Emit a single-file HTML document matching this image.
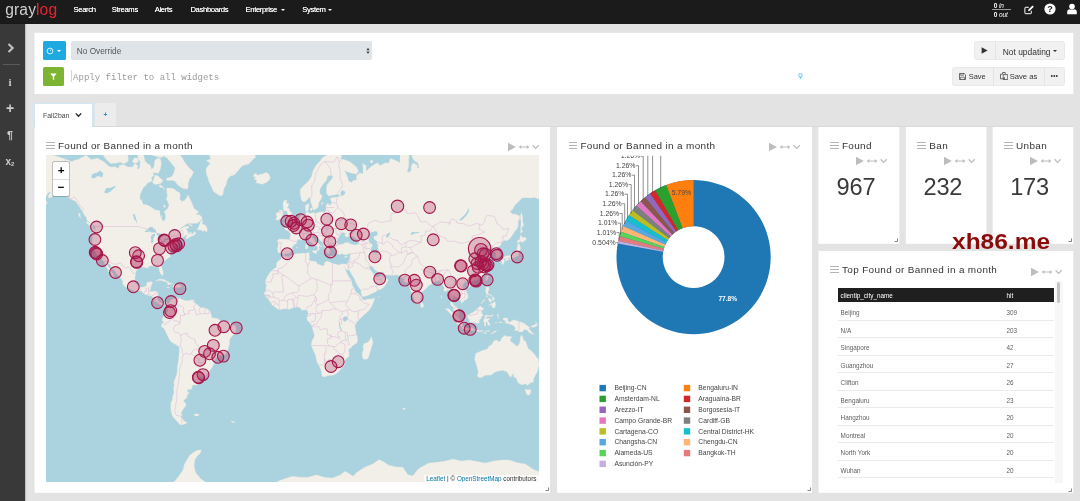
<!DOCTYPE html><html><head><meta charset="utf-8"><title>Graylog - Fail2ban</title><style>
html,body{margin:0;padding:0}
body{width:1080px;height:501px;background:#e3e3e3;position:relative;overflow:hidden;font-family:"Liberation Sans",sans-serif}
.abs{position:absolute}
.nav{position:absolute;left:0;top:0;width:1080px;height:23.6px;background:#1b1b1b}
.logo{position:absolute;left:5.3px;top:0.5px;font-size:15.6px;line-height:18px;letter-spacing:0.1px}
.g1{color:#d0d0d0}.g2{color:#e5252f}
.ni{position:absolute;top:4.9px;font-size:7.7px;letter-spacing:-0.36px;line-height:9px;color:#fff;text-shadow:0 0 0.6px rgba(255,255,255,0.8)}
.caret{position:absolute;width:0;height:0;border-left:2.1px solid transparent;border-right:2.1px solid transparent;border-top:2.3px solid #fff}
.thr{position:absolute;left:992.2px;top:1.6px;width:18.4px;font-size:6.5px;color:#fff;line-height:7px;text-align:left;text-indent:1.6px;letter-spacing:-0.1px}
.thr .t1{border-bottom:0.6px solid #9a9a9a;height:7.4px}
.thr .t2{padding-top:1.1px}
.side{position:absolute;left:0;top:23.6px;width:25px;height:478px;background:#393939;box-shadow:0.8px 0 1.6px rgba(0,0,0,0.35)}
.si{position:absolute;left:0;width:20px;text-align:center;color:#cdcdcd;line-height:14px}
.panel{position:absolute}
.pbg{position:absolute;background:#fff}
.btng{position:absolute;background:#f0f1f0;border:0.5px solid #e9eae9;border-radius:2.8px;box-sizing:border-box}
.wt{position:absolute;font-size:9.95px;letter-spacing:0.35px;line-height:13px;color:#333;white-space:nowrap}
.tt{font-size:6.35px;line-height:8px;color:#606060;white-space:nowrap}
</style></head><body><div id="root" style="position:absolute;left:0;top:0;width:1080px;height:501px;will-change:transform"><svg class="abs" style="left:0;top:0" width="1080" height="501" viewBox="0 0 1080 501"><rect x="34.5" y="32.8" width="1038.8" height="61.3" fill="#fff"/><rect x="34.5" y="126.7" width="515.6" height="366.1" fill="#fff"/><rect x="557.1" y="126.7" width="254.9" height="366.1" fill="#fff"/><rect x="818.4" y="126.7" width="81.0" height="117.1" fill="#fff"/><rect x="905.8" y="126.7" width="80.6" height="117.1" fill="#fff"/><rect x="992.6" y="126.7" width="80.7" height="117.1" fill="#fff"/><rect x="818.5" y="250.9" width="254.8" height="241.9" fill="#fff"/></svg><div class="nav"><div class="logo"><span class="g1">gray</span><span class="g2">log</span></div><span class="ni" style="left:73.5px">Search</span><span class="ni" style="left:111.8px">Streams</span><span class="ni" style="left:154.7px">Alerts</span><span class="ni" style="left:190.4px">Dashboards</span><span class="ni" style="left:245.5px">Enterprise</span><span class="ni" style="left:302.2px">System</span><span class="caret" style="left:281.09999999999997px;top:8.6px;border-top-color:#fff"></span><span class="caret" style="left:327.9px;top:8.6px;border-top-color:#fff"></span><div class="thr"><div class="t1"><b>0</b> <i>in</i></div><div class="t2"><b>0</b> <i>out</i></div></div><svg class="abs" style="left:1023px;top:3.5px" width="12" height="12" viewBox="0 0 12 12"><path d="M8.3 6.8v2.4q0 .5-.5.5H2.4q-.5 0-.5-.5V3.8q0-.5.5-.5h3.4" fill="none" stroke="#fff" stroke-width="1"/><path d="M5 7.3l.5-1.9 4-4 1.3 1.3-4 4z" fill="#fff"/></svg><svg class="abs" style="left:1043.8px;top:3px" width="12" height="12" viewBox="0 0 12 12"><circle cx="6" cy="6" r="5.6" fill="#fff"/><text x="6" y="9.2" font-size="9" font-weight="bold" text-anchor="middle" fill="#1c1c1c" font-family="Liberation Sans, sans-serif">?</text></svg><svg class="abs" style="left:1066px;top:3px" width="12" height="12" viewBox="0 0 12 12"><circle cx="6" cy="3.6" r="2.8" fill="#fff"/><path d="M1.2 11.2V8.6q0-2.2 2.4-2.4 2.4 1.2 4.8 0 2.4.2 2.4 2.4v2.6z" fill="#fff"/></svg></div><div class="side"><svg class="abs" style="left:5px;top:18px" width="12" height="12" viewBox="0 0 12 12"><path d="M3.5 2l4.2 4-4.2 4" fill="none" stroke="#c4c4c4" stroke-width="2"/></svg><div class="abs" style="left:3px;top:40.5px;width:17px;height:1px;background:#5a5a5a"></div><span class="si" style="top:51px;font-family:'Liberation Serif',serif;font-weight:bold;font-size:11px">i</span><span class="si" style="top:77.4px;font-weight:bold;font-size:14px">+</span><span class="si" style="top:104.2px;font-weight:bold;font-size:11px">¶</span><span class="si" style="top:131px;font-weight:bold;font-size:10px">x<span style="font-size:6px;position:relative;top:1.5px">2</span></span></div><div class="panel" style="left:34.5px;top:32.7px;width:1038.8px;height:61.4px"><div class="abs" style="left:8.5px;top:8.6px;width:22.6px;height:19px;background:#1eaae1;border-radius:1.5px"></div><svg class="abs" style="left:11.8px;top:14.3px" width="8" height="8" viewBox="0 0 8 8"><circle cx="4" cy="4" r="2.9" fill="none" stroke="#fff" stroke-width="0.8"/><path d="M4 4l1.3-1.6" stroke="#fff" stroke-width="0.7" fill="none"/></svg><span class="caret" style="left:22.3px;top:17.5px;border-top-color:#fff"></span><div class="abs" style="left:36.7px;top:8.6px;width:301px;height:18.8px;background:#dfe4e8;border-radius:2px"></div><span class="abs" style="left:42.3px;top:14.4px;font-size:8.25px;color:#555;line-height:10px">No Override</span><svg class="abs" style="left:331px;top:14.5px" width="4" height="8" viewBox="0 0 4 8"><path d="M0.4 3.2L2 0.8 3.6 3.2zM0.4 4.6L2 7 3.6 4.6z" fill="#444"/></svg><div class="abs" style="left:8.5px;top:34px;width:21px;height:19px;background:#7db532;border-radius:1.5px"></div><svg class="abs" style="left:15.5px;top:40px" width="7" height="8" viewBox="0 0 7 8"><path d="M0.3 0.5h6.4L4.2 3.6v3.6L2.8 6.2V3.6z" fill="#fff"/></svg><div class="abs" style="left:36px;top:37.5px;width:0.5px;height:12px;background:#d5d5d5"></div><span class="abs" style="left:38.6px;top:39.5px;font-family:'Liberation Mono',monospace;font-size:9.02px;color:#9a9a9a;line-height:11px;white-space:pre">Apply filter to all widgets</span><svg class="abs" style="left:763.5px;top:40px" width="5" height="7" viewBox="0 0 5 7"><circle cx="2.5" cy="2.3" r="1.8" fill="none" stroke="#36b6e6" stroke-width="0.7"/><path d="M1.7 4.6h1.6M1.9 5.6h1.2" stroke="#36b6e6" stroke-width="0.7"/></svg><div class="btng" style="left:939.7px;top:8.6px;width:90.4px;height:19.2px"></div><div class="abs" style="left:960.3px;top:8.6px;width:0.5px;height:19.2px;background:#e4e4e4"></div><svg class="abs" style="left:946.5px;top:14.8px" width="7" height="7" viewBox="0 0 7 7"><path d="M0.6 0.3L6.6 3.5 0.6 6.7z" fill="#333"/></svg><span class="abs" style="left:968.2px;top:14px;font-size:8.45px;color:#333;line-height:10px">Not updating</span><span class="caret" style="left:1018.2px;top:17.6px;border-top-color:#333"></span><div class="btng" style="left:917.8px;top:34.2px;width:112.3px;height:19px"></div><div class="abs" style="left:958.3px;top:34.2px;width:0.5px;height:19px;background:#e4e4e4"></div><div class="abs" style="left:1009.8px;top:34.2px;width:0.5px;height:19px;background:#e4e4e4"></div><svg class="abs" style="left:924.7px;top:40.3px" width="7" height="7" viewBox="0 0 7 7"><path d="M0.5 0.5h4.7l1.3 1.3v4.7h-6z" fill="none" stroke="#333" stroke-width="0.7"/><path d="M1.7 0.5v1.8h2.6V0.5M1.6 6.5V4.2h3.8v2.3" fill="none" stroke="#333" stroke-width="0.6"/></svg><span class="abs" style="left:934.3px;top:39.3px;font-size:7.4px;color:#333;line-height:10px">Save</span><svg class="abs" style="left:965px;top:39.8px" width="8.5" height="8" viewBox="0 0 8.5 8"><path d="M2.6 2.2V0.5h2.6l0 1.7M2.6 2.2H0.5v4.6h4v-1.7" fill="none" stroke="#333" stroke-width="0.7"/><path d="M3.2 2.6h2.7l1.8 0v4.9H3.2z" fill="none" stroke="#333" stroke-width="0.7"/></svg><span class="abs" style="left:975.2px;top:39.3px;font-size:7.65px;color:#333;line-height:10px">Save as</span><svg class="abs" style="left:1015.5px;top:41.5px" width="9" height="4" viewBox="0 0 9 4"><circle cx="1.8" cy="2" r="0.95" fill="#333"/><circle cx="4.3" cy="2" r="0.95" fill="#333"/><circle cx="6.8" cy="2" r="0.95" fill="#333"/></svg></div><div class="abs" style="left:34px;top:126px;width:1039px;height:1px;background:#d9d9d9"></div><div class="abs" style="left:34px;top:103px;width:59px;height:23.6px;background:#fff;border:0.6px solid #cfe7f4;border-bottom:none;box-sizing:border-box;border-radius:1.5px 1.5px 0 0"></div><span class="abs" style="left:43px;top:110.5px;font-size:6.9px;color:#444;line-height:9px">Fail2ban</span><svg class="abs" style="left:75.3px;top:112.2px" width="7" height="6" viewBox="0 0 7 6"><path d="M0.8 1.4L3.5 4.2 6.2 1.4" fill="none" stroke="#222" stroke-width="1.3"/></svg><div class="abs" style="left:94.8px;top:103.4px;width:21.4px;height:22.6px;background:#ececec;border-radius:1.5px 1.5px 0 0"></div><span class="abs" style="left:103.6px;top:110px;font-size:6.5px;color:#1e8fc6;line-height:9px;font-weight:bold">+</span><div class="panel" style="left:34.5px;top:126.8px;width:515.6px;height:365.7px"><div class="abs" style="left:11.599999999999998px;top:15.2px;width:8.7px;height:1.15px;background:#b4b4b4"></div><div class="abs" style="left:11.599999999999998px;top:18.2px;width:8.7px;height:1.15px;background:#b4b4b4"></div><div class="abs" style="left:11.599999999999998px;top:21.2px;width:8.7px;height:1.15px;background:#b4b4b4"></div><span class="wt" style="left:23.4px;top:12.0px">Found or Banned in a month</span><svg class="abs" style="left:473.5px;top:15.5px" width="33" height="10" viewBox="0 0 33 10"><path d="M0 0.8L7.9 5 0 9.2z" fill="#bdbdbd"/><path d="M10.7 5L13.3 2.9V4.5H18.8V2.9L21.4 5 18.8 7.1V5.5H13.3V7.1z" fill="#bdbdbd"/><path d="M24.6 3.3L27.65 6.4 30.7 3.3" fill="none" stroke="#bdbdbd" stroke-width="1.25"/></svg><div class="abs" style="left:11.5px;top:28.7px;width:493.0px;height:326.7px;background:#aad3df;overflow:hidden"><svg class="abs" style="left:0;top:0" width="493.0" height="326.7" viewBox="0 0 493.0 326.7"><path d="M-24.1 21.0L-21.6 9.9L-16.0 4.6L-5.7 -4.1L1.7 -1.6L8.1 0.3L19.4 4.1L25.8 6.8L29.0 5.0L32.2 4.6L37.1 1.8L40.3 0.3L45.1 4.6L51.5 3.2L58.0 6.8L62.0 10.4L64.4 12.1L69.2 11.7L72.5 13.4L73.3 10.4L77.3 9.5L82.1 12.1L86.9 11.7L88.5 8.6L91.8 10.4L91.3 14.2L93.4 13.4L94.2 6.8L91.8 3.2L91.8 -2.6L94.2 -7.1L96.6 -4.1L98.2 2.2L99.0 5.9L101.4 8.6L104.6 10.4L105.4 14.2L107.9 12.1L108.7 5.5L111.1 3.2L114.3 3.6L115.4 7.7L114.6 13.4L112.7 18.3L109.5 17.9L107.0 17.5L107.9 20.7L105.4 22.2L106.2 26.0L103.8 27.1L101.4 28.2L99.8 30.7L97.4 32.4L95.8 35.9L94.2 39.2L93.9 44.0L95.8 45.2L97.2 49.5L99.8 49.5L104.6 51.8L109.5 55.0L113.8 55.5L114.1 59.9L115.4 63.1L116.9 65.7L118.3 65.7L119.6 63.1L119.1 58.6L118.0 56.7L121.5 53.8L123.0 50.1L121.5 46.2L120.2 44.3L121.5 40.8L120.7 37.5L120.7 33.1L124.7 33.1L128.0 33.8L130.4 35.9L133.6 37.5L134.4 40.8L133.6 44.0L136.0 46.5L138.4 45.5L140.8 42.4L142.0 39.8L144.0 44.0L146.5 49.2L148.1 53.5L151.3 55.8L152.9 57.2L149.7 59.4L153.7 59.7L156.4 63.1L154.8 65.5L151.3 68.3L146.5 68.5L141.6 68.5L138.4 70.5L135.5 72.5L132.8 75.6L131.7 76.8L134.4 74.4L138.4 71.5L142.4 71.3L142.8 73.0L140.0 74.0L141.6 75.9L142.0 78.2L144.0 78.9L146.8 78.9L148.9 76.3L150.0 78.7L147.6 80.5L144.0 81.9L140.7 84.3L139.7 82.5L142.1 80.1L140.0 80.5L138.1 81.4L135.2 82.8L133.1 84.1L132.3 86.1L132.6 87.6L133.6 88.3L132.0 88.7L129.6 89.3L127.3 90.4L127.0 92.3L125.7 94.0L125.1 95.4L123.9 98.1L123.9 100.1L124.6 101.4L122.7 102.8L120.7 104.2L118.8 105.5L116.2 107.6L115.3 110.1L115.6 112.5L116.7 115.2L117.3 118.0L116.9 120.3L115.6 120.3L114.6 118.5L113.2 115.8L113.2 113.4L111.4 111.6L109.0 112.1L107.0 110.8L104.6 111.0L102.5 111.2L102.5 113.2L100.6 113.1L98.2 112.3L95.3 112.1L93.4 113.2L91.0 114.7L89.5 117.1L89.8 119.0L89.0 122.4L88.9 125.4L89.8 128.2L91.3 130.5L93.1 131.6L94.5 132.4L96.9 131.9L99.0 131.7L100.5 130.2L100.8 127.6L103.8 126.8L106.2 126.8L106.6 128.0L105.4 130.0L105.0 132.2L104.2 134.4L103.5 136.3L105.4 136.5L107.9 136.3L110.3 136.3L112.2 137.8L111.9 140.3L111.7 142.8L111.4 144.4L112.4 146.0L114.0 147.7L115.9 148.0L117.8 147.0L119.4 146.8L121.4 148.0L122.5 149.1L123.5 147.7L124.6 145.4L125.7 144.2L128.0 143.9L129.9 142.9L131.3 142.1L131.5 143.9L130.7 144.7L131.7 144.6L133.1 143.6L133.8 142.4L134.4 143.6L136.3 144.6L138.4 145.2L140.8 145.7L142.8 145.4L144.9 144.9L146.5 145.0L146.8 146.0L148.4 147.2L149.4 148.5L151.3 149.5L152.9 151.2L154.5 152.5L157.7 152.7L160.1 153.2L162.5 154.6L163.8 155.8L165.0 159.0L165.8 160.9L165.0 162.2L166.6 162.5L168.5 163.2L170.6 163.3L173.0 164.5L174.8 166.2L177.0 166.1L179.4 166.9L181.9 166.7L184.3 168.2L186.4 169.9L189.3 170.6L190.1 173.5L189.9 176.4L188.3 179.0L186.4 180.8L184.4 183.1L183.5 185.8L183.5 189.1L182.7 192.2L181.9 195.0L180.4 198.0L178.8 199.9L176.5 200.2L174.3 200.8L171.7 202.0L169.3 203.9L168.0 205.9L168.0 208.4L166.9 211.0L165.3 213.8L163.4 216.0L161.9 217.5L160.1 220.0L158.0 222.0L155.6 222.2L152.9 220.6L152.3 221.2L154.2 223.4L154.8 225.3L153.5 228.4L150.5 230.0L146.5 230.2L146.0 232.5L145.2 234.6L141.6 234.6L141.6 237.2L143.6 237.4L142.6 238.7L141.2 240.3L140.8 243.0L138.4 244.8L137.5 246.4L139.5 248.1L140.3 250.0L138.1 252.9L136.5 255.4L135.2 257.4L136.2 261.3L134.4 261.8L136.3 263.1L137.6 265.8L141.3 267.7L139.2 268.9L136.0 269.7L133.6 269.4L131.2 266.6L128.8 263.9L126.4 261.0L125.1 256.6L124.7 252.4L124.7 248.1L126.4 244.6L126.7 241.2L128.0 237.2L127.5 233.6L128.3 230.4L127.8 227.0L129.1 223.8L130.7 219.5L131.2 215.6L131.3 211.9L132.0 208.2L132.6 204.6L132.8 201.1L133.3 196.8L133.1 192.3L131.3 190.6L128.8 189.1L125.5 187.3L123.5 184.8L122.0 181.8L120.4 178.4L119.1 175.4L117.7 173.2L115.6 171.9L115.4 169.3L116.9 167.8L117.7 166.2L116.1 165.9L116.2 163.8L117.3 161.7L118.1 160.6L119.4 159.8L119.9 158.2L121.8 156.2L121.7 153.3L121.7 151.2L120.7 150.3L120.2 149.0L119.1 147.8L118.1 147.8L117.2 148.8L117.0 150.3L115.9 150.4L114.9 149.5L113.0 149.0L111.7 148.3L110.6 146.8L109.1 146.4L108.2 145.5L108.3 144.2L106.9 142.6L105.4 141.1L103.8 140.8L101.4 139.9L99.3 139.6L97.7 138.5L95.3 136.3L93.4 135.8L91.0 136.6L88.2 135.8L85.7 134.8L82.9 133.4L80.0 132.2L78.1 130.7L76.5 128.8L76.8 126.8L76.0 124.9L74.2 122.8L72.5 120.5L70.4 119.2L69.6 117.1L68.3 115.6L66.3 113.8L65.1 111.9L64.3 109.5L61.7 108.4L61.5 110.1L62.6 111.9L64.4 114.3L65.5 116.7L67.2 119.2L68.1 121.5L69.9 123.8L68.9 124.0L66.5 121.5L65.7 119.2L64.1 117.6L62.0 116.5L62.5 114.7L60.9 112.9L59.8 110.8L58.5 108.4L57.7 106.5L55.7 104.4L54.0 103.4L52.4 103.0L50.7 100.1L49.9 98.3L49.1 96.6L48.0 95.0L47.0 92.5L46.2 91.0L46.6 88.1L45.9 85.9L46.6 82.1L46.7 78.2L45.8 73.2L48.0 73.5L49.1 75.6L49.3 72.7L48.3 71.0L45.9 69.0L43.5 67.3L41.1 65.7L40.3 62.6L37.9 59.4L36.6 56.7L34.7 53.8L32.2 50.1L29.8 46.5L27.4 45.2L24.5 44.3L21.5 41.5L18.6 40.8L14.5 40.5L11.3 38.2L8.1 38.5L7.3 41.1L4.1 42.7L2.0 43.0L2.8 39.5L5.2 36.9L2.5 37.5L0.9 40.2L-0.9 43.0L-1.9 46.2L-4.8 49.2L-8.8 53.0L-12.8 55.3L-16.0 56.7L-12.0 53.0L-8.0 48.3L-6.4 44.6L-9.6 44.9L-14.4 44.9L-14.4 40.8L-19.2 38.5L-20.8 35.2L-19.2 30.7L-13.6 28.5L-12.8 25.2L-19.2 25.2L-24.1 21.0ZM47.7 73.0L45.1 72.0L42.2 69.5L39.8 67.3L41.4 66.8L44.6 68.5L46.7 70.8ZM35.1 63.4L33.0 61.3L32.2 58.3L34.2 58.6L34.2 61.3ZM-2.3 50.1L0.1 49.5L1.4 47.7L0.4 46.2L-1.9 47.7ZM150.8 74.7L152.1 72.7L153.7 69.0L154.8 66.0L156.9 65.2L156.1 69.0L157.7 69.5L159.7 70.3L160.9 72.7L161.4 75.1L160.5 77.0L158.5 75.6L156.4 76.6L155.3 74.9L152.9 74.9ZM142.8 77.0L144.9 77.5L146.5 77.7L145.7 78.7L143.6 78.2ZM142.4 69.3L145.2 69.8L146.9 71.3L144.0 70.8ZM106.2 27.1L108.7 29.6L111.9 29.3L115.1 28.2L117.0 25.2L114.6 23.4L111.9 20.7L109.0 19.9L107.9 23.4L107.4 25.2ZM147.6 17.1L145.7 21.4L143.6 24.1L142.0 28.9L142.3 32.4L140.8 34.2L138.4 33.1L135.5 28.2L139.2 34.2L136.0 33.1L131.2 29.6L128.8 26.0L125.5 25.6L121.0 25.6L120.2 23.4L125.5 21.8L127.5 18.7L129.1 12.9L125.9 9.1L121.5 3.6L118.3 1.3L114.3 2.7L109.5 1.3L106.2 0.3L102.5 -2.6L102.2 -15.8L109.5 -17.5L115.9 -16.9L122.3 -11.9L127.2 -6.6L132.0 -2.6L136.0 2.2L138.4 6.8L142.4 12.1ZM55.6 -5.1L57.7 1.3L61.2 5.5L64.4 8.6L69.2 8.2L74.1 7.3L78.1 9.1L82.4 5.9L82.1 0.8L78.9 -2.6L77.3 -11.9L69.2 -13.0L61.2 -13.0L56.4 -10.3ZM44.3 -7.6L47.5 -3.6L51.5 -4.6L54.8 -10.3L57.2 -18.7L49.9 -21.6L45.1 -15.8ZM86.1 6.8L89.4 8.6L92.6 6.8L91.8 3.2L88.5 2.7ZM82.1 -5.1L86.9 -4.1L90.2 -7.6L90.2 -15.8L83.7 -17.5L81.3 -11.9ZM92.6 -7.6L97.4 -7.6L100.6 -13.0L99.8 -18.7L93.4 -18.7ZM112.7 31.0L115.1 32.8L117.5 32.1L115.9 30.7L113.5 30.0ZM117.0 33.1L118.3 35.2L118.3 32.8ZM114.3 61.0L115.9 61.8L116.7 61.3L115.4 60.5ZM117.5 51.5L119.1 53.0L119.1 50.1L117.8 50.1ZM128.8 -49.4L133.6 -33.1L140.0 -31.1L149.7 -31.1L152.9 -24.7L156.1 -15.8L157.7 -7.6L158.5 -1.6L163.4 -0.1L164.5 4.1L160.1 5.5L164.2 8.2L160.1 13.4L160.1 18.3L162.1 23.4L163.0 27.1L165.3 31.4L167.1 35.9L169.8 38.2L173.0 40.2L175.6 41.1L177.0 39.2L177.8 34.2L180.2 29.6L181.4 24.5L184.3 21.0L188.3 19.9L192.3 15.4L196.3 10.8L202.8 9.1L206.0 5.5L210.0 1.8L206.8 -2.6L210.8 -7.6L209.2 -13.0L214.0 -18.7L214.8 -31.1L217.2 -45.4L214.0 -62.3L128.8 -62.3ZM206.9 21.4L209.2 17.9L211.6 20.3L213.5 19.5L216.9 18.7L220.0 17.5L222.6 18.7L224.3 22.6L222.9 25.6L220.5 27.5L216.4 29.3L213.2 28.5L209.7 27.8L211.0 25.6L207.8 23.7L210.3 22.2ZM237.0 68.8L239.8 68.3L241.4 67.3L244.6 67.3L247.0 67.0L248.5 66.0L247.2 65.2L248.9 62.4L246.7 61.3L246.4 59.7L245.4 57.5L243.8 55.8L243.0 53.3L241.1 53.0L242.2 51.2L243.0 48.6L240.1 48.0L241.2 45.2L238.2 45.2L236.9 48.3L237.2 51.5L237.2 54.7L238.5 56.1L240.6 56.1L241.4 58.6L241.4 60.2L239.0 60.5L239.4 62.9L237.8 64.5L239.8 65.0L241.4 65.5L239.3 66.3L237.8 68.0ZM235.9 63.4L236.4 60.5L237.2 57.2L236.1 55.3L233.7 55.0L232.5 57.2L230.1 58.0L230.3 60.2L231.2 62.1L229.6 63.9L230.4 65.2L233.3 64.5ZM231.1 94.6L231.9 91.9L232.2 88.7L231.4 85.4L233.3 83.9L237.4 84.3L240.6 84.3L243.3 84.6L244.3 81.6L244.4 79.1L242.7 76.3L239.1 74.4L238.6 73.0L241.4 72.0L243.6 72.5L243.3 69.8L244.4 70.8L246.5 70.3L248.6 68.3L249.1 66.5L250.2 66.3L251.8 65.5L253.1 63.4L253.9 61.3L255.9 60.2L257.8 59.7L259.9 59.7L260.2 57.2L259.4 54.4L259.4 50.1L261.5 49.5L263.1 48.0L262.8 51.5L262.3 54.4L261.8 56.4L263.6 58.6L265.5 58.0L267.9 57.5L269.2 58.6L272.7 57.2L276.0 56.7L278.1 57.5L280.0 55.3L280.0 50.6L281.6 48.3L283.5 50.1L284.8 49.8L285.5 46.2L284.0 43.4L286.4 42.4L291.2 42.1L294.5 41.1L292.0 39.2L286.4 40.2L282.9 41.1L280.5 38.2L280.5 34.2L280.8 30.0L285.6 24.1L286.9 21.8L285.1 20.3L281.6 21.0L280.5 25.2L276.8 29.6L274.0 34.2L273.9 38.5L276.4 41.1L275.2 44.0L272.9 47.7L272.4 51.5L271.6 52.7L269.2 54.4L267.1 54.7L266.6 52.4L265.2 48.6L264.2 44.0L263.3 42.1L261.5 44.6L259.1 46.8L256.7 46.8L255.0 44.0L254.2 39.2L254.2 34.2L257.5 30.7L260.7 27.8L263.1 25.2L265.5 21.4L267.1 15.4L270.3 9.9L273.5 6.8L276.8 2.2L281.6 -0.1L287.5 -3.1L291.2 -2.6L296.1 0.8L294.5 3.6L299.3 5.0L304.1 6.8L310.5 12.1L312.6 16.3L310.5 19.1L305.7 18.3L300.9 16.7L298.5 15.4L301.7 22.2L302.5 26.0L305.7 27.5L307.3 25.2L310.5 24.9L310.5 20.7L313.8 17.9L317.0 18.7L317.0 11.2L316.2 8.6L320.2 10.4L320.2 16.3L323.4 12.9L328.2 9.5L331.5 7.7L333.9 10.4L339.5 7.7L342.7 8.2L344.3 3.6L350.0 5.5L354.0 7.7L354.0 4.6L354.0 -2.6L356.4 -11.9L362.8 -13.0L363.6 -5.1L362.8 4.6L362.8 11.2L361.2 16.3L362.8 17.5L365.2 15.4L365.2 11.2L366.9 7.7L370.9 9.9L371.7 13.4L373.0 12.5L371.7 7.7L368.5 5.9L366.0 2.2L366.0 -5.1L368.5 -8.7L371.7 -8.7L375.7 -7.6L378.1 -5.1L379.7 -0.1L380.5 -6.6L378.1 -15.8L384.5 -18.7L391.0 -27.8L407.1 -34.5L415.1 -41.6L426.4 -31.1L428.0 -18.7L423.2 -17.5L436.0 -14.1L445.7 -16.4L452.1 -10.3L454.5 -2.6L458.5 -5.1L463.4 -5.1L471.4 -10.3L479.5 -9.2L487.5 -5.1L495.5 -2.6L503.6 2.2L511.6 4.6L519.7 4.6L532.5 6.8L535.8 9.1L535.8 34.2L527.7 34.2L519.7 40.8L511.6 40.8L508.4 47.1L506.8 53.0L503.6 61.3L498.8 66.5L498.0 58.6L496.4 51.5L498.8 47.1L503.6 40.8L508.4 34.2L503.6 35.9L497.2 39.2L495.5 43.0L491.5 44.0L488.8 42.4L484.3 43.0L479.5 42.7L476.2 43.0L472.2 47.1L469.0 50.1L466.6 54.4L463.9 56.4L466.6 59.1L469.0 59.1L471.4 59.9L473.5 60.8L473.7 63.4L472.2 66.5L472.2 70.3L471.7 72.7L469.0 76.3L465.8 81.0L463.4 84.3L460.2 85.9L458.4 85.2L456.5 87.0L455.0 88.7L454.8 90.2L452.1 91.9L451.3 93.3L452.8 95.2L454.4 98.1L454.5 100.4L453.7 101.8L451.6 102.6L449.5 103.0L449.7 100.1L450.0 98.1L448.1 96.6L447.3 95.0L447.6 92.9L446.2 91.9L444.1 92.7L441.8 94.2L441.2 93.1L442.5 90.8L440.9 90.0L438.4 92.3L436.0 93.6L435.5 95.0L437.3 96.4L437.6 97.4L440.4 96.4L443.3 97.2L440.9 98.9L439.7 100.1L438.1 102.0L439.7 104.0L440.7 106.7L442.3 108.4L442.3 109.9L440.5 111.0L442.5 111.8L441.8 114.3L440.4 115.6L438.8 118.9L436.3 121.5L433.9 123.6L429.9 125.4L428.8 125.6L424.8 126.8L423.6 128.8L422.7 126.8L420.4 126.6L418.0 128.0L416.4 131.1L417.5 133.6L420.3 136.1L421.9 140.3L422.0 142.8L419.9 144.9L418.0 145.5L417.5 146.8L415.1 148.3L415.1 146.0L414.3 145.4L412.7 145.0L411.7 143.2L410.3 141.9L408.5 141.6L407.9 140.3L407.1 140.6L406.9 142.8L405.9 145.2L405.9 147.2L407.1 148.5L407.9 150.6L409.5 151.2L410.8 152.2L412.5 155.0L412.7 157.7L413.8 159.9L412.5 159.9L409.2 157.7L407.9 155.8L407.6 153.3L406.6 151.7L404.3 149.3L404.7 146.0L404.8 142.8L403.4 137.8L403.0 135.3L401.4 135.1L399.5 136.5L397.9 136.1L398.2 132.8L396.6 130.2L395.0 128.0L394.2 126.8L393.9 125.2L391.8 125.9L389.4 126.3L387.8 126.4L386.2 127.1L385.4 129.4L382.9 130.5L381.3 132.2L378.6 134.9L376.5 136.5L375.2 137.8L375.4 140.9L374.6 143.6L374.6 145.5L373.3 147.2L372.0 147.8L370.9 149.1L369.3 147.7L368.5 145.2L367.7 142.8L366.5 141.1L365.7 137.8L364.4 135.3L363.5 131.1L363.2 127.6L362.8 125.6L362.0 127.6L359.6 128.0L357.2 125.4L359.1 124.5L356.9 123.6L354.8 122.4L353.5 120.6L350.0 120.1L345.1 120.5L341.1 119.9L338.4 119.4L337.6 117.1L336.3 117.6L333.9 117.8L330.7 116.2L328.2 114.3L327.4 112.5L325.0 110.8L323.4 111.9L324.2 114.3L325.8 116.5L327.0 118.0L327.8 119.8L328.7 118.7L329.2 120.6L328.7 121.9L330.7 122.1L333.1 122.1L335.2 120.1L336.6 118.5L336.9 120.6L337.9 122.4L340.5 123.1L342.4 125.0L340.6 128.5L339.0 131.1L337.1 132.8L334.7 134.4L331.5 135.1L330.2 136.8L325.0 139.0L321.8 140.6L318.6 141.4L316.2 141.6L315.7 140.3L315.1 137.8L314.9 135.3L313.0 132.8L311.4 130.2L309.3 126.8L308.1 123.3L306.2 120.6L304.9 118.0L303.3 115.2L302.2 114.3L302.5 112.5L301.4 115.6L300.1 114.3L298.6 111.8L300.1 116.2L301.7 119.8L303.3 122.4L305.7 125.9L306.2 128.5L306.2 130.2L308.1 132.8L309.7 137.0L312.2 138.6L314.6 141.1L315.9 141.9L315.9 143.6L317.8 145.2L321.8 144.1L325.0 143.9L328.6 143.1L328.2 145.4L326.6 149.3L325.0 152.5L323.4 155.0L320.2 158.2L319.1 159.0L315.4 162.2L313.0 164.9L310.9 166.7L310.1 168.6L308.9 171.1L309.4 173.2L309.7 175.9L310.5 179.2L311.5 182.5L311.7 185.8L310.5 188.3L306.5 190.8L304.9 193.0L302.5 194.7L303.0 197.6L303.3 201.1L299.3 204.6L299.0 205.5L299.0 208.2L298.2 210.6L296.1 212.6L293.7 215.6L291.2 218.1L288.0 220.0L284.0 220.4L281.6 220.8L278.4 222.0L276.0 221.0L275.6 218.5L275.5 216.6L274.4 213.8L272.7 210.2L270.7 206.4L269.5 200.2L267.9 196.8L265.5 191.6L265.2 189.1L266.0 185.8L267.9 182.5L268.4 180.0L267.4 176.7L266.0 171.9L265.5 170.3L263.9 168.3L261.8 165.9L260.7 163.3L261.5 161.4L262.0 158.5L261.8 156.6L261.5 155.8L260.2 155.0L259.1 155.0L257.5 155.1L255.9 155.3L254.2 152.9L253.1 152.0L251.7 151.9L248.1 152.4L245.9 153.3L243.0 154.5L241.4 154.0L239.8 153.7L236.5 154.1L234.1 155.1L231.7 154.1L228.8 152.0L226.1 150.1L225.0 148.5L224.2 146.8L222.4 144.7L221.3 143.1L219.3 141.9L219.2 140.3L218.0 138.3L219.7 136.1L220.0 132.8L220.5 130.2L219.7 128.5L218.9 127.6L220.5 122.9L222.9 118.9L225.3 115.8L228.0 113.8L230.1 112.5L230.6 110.6L230.4 108.8L231.2 106.9L234.0 104.8L235.3 103.8L236.5 100.6L237.7 100.3L239.8 101.6L241.4 101.4L243.0 101.8L244.6 100.6L246.2 100.3L248.6 99.1L251.0 98.5L254.2 98.5L257.5 98.1L259.9 98.3L262.0 97.4L263.9 98.1L263.1 99.1L263.3 101.0L263.9 102.4L262.6 104.0L263.9 104.9L265.5 106.1L267.4 106.1L270.7 107.1L271.1 108.8L274.4 109.9L276.8 111.0L278.4 109.7L278.4 107.8L280.8 106.1L283.2 106.7L286.4 108.4L289.6 109.1L292.9 109.9L294.5 109.3L296.1 108.8L298.2 109.1L301.2 109.1L302.2 107.6L302.5 105.9L303.3 104.2L304.0 102.0L304.1 99.5L304.4 98.5L302.5 98.7L300.9 99.5L298.5 99.9L296.1 98.5L293.7 99.7L291.2 98.7L290.1 97.0L288.8 95.0L289.3 92.9L288.3 91.7L290.4 91.0L292.9 89.8L294.5 89.3L296.9 89.1L299.3 87.6L302.5 87.6L304.9 89.1L307.3 89.8L310.5 89.8L313.1 88.5L313.0 86.5L310.5 84.3L307.3 82.1L305.7 81.0L305.4 80.1L307.0 77.3L308.9 75.9L306.5 76.1L303.0 77.7L302.5 79.4L304.6 80.3L303.0 81.0L300.9 82.3L300.1 81.9L298.5 80.1L300.3 78.4L298.5 78.2L296.9 77.3L295.6 77.5L294.0 80.3L292.4 82.8L291.2 85.0L290.6 86.5L291.6 88.7L292.9 89.3L290.4 89.8L289.2 90.8L288.0 90.2L285.6 90.0L284.5 91.3L283.0 90.8L282.7 92.9L283.7 94.4L284.8 96.0L283.5 96.2L283.5 97.4L282.9 99.1L282.1 99.1L281.1 98.5L280.3 96.4L280.5 95.4L279.7 94.4L278.7 92.7L277.6 91.3L277.4 89.1L277.1 87.6L276.0 86.8L272.7 84.3L270.7 82.8L269.5 80.3L268.2 81.2L268.2 79.4L266.0 80.1L266.1 82.5L268.1 84.3L269.0 86.8L271.9 87.8L273.4 89.6L276.0 91.7L275.0 92.1L273.5 90.8L272.9 92.5L273.7 94.0L272.7 95.4L271.5 96.2L271.6 94.6L271.9 92.9L271.3 91.9L270.0 90.6L269.0 90.2L267.1 89.3L265.8 88.1L263.9 86.8L263.1 85.4L262.6 83.4L260.7 82.3L258.3 83.7L256.2 85.2L254.2 84.6L252.6 84.3L251.0 85.4L251.3 87.0L249.7 89.1L247.5 90.2L245.9 92.9L246.5 94.4L245.1 96.0L244.9 96.8L243.0 98.5L239.1 98.7L237.5 99.9L236.1 98.9L234.3 97.6L231.9 98.1L232.0 95.4ZM263.9 55.0L264.4 53.3L266.3 52.7L266.5 54.1L265.8 55.8ZM275.5 50.1L275.8 47.4L277.1 47.4L276.4 49.5ZM266.3 96.0L267.9 95.6L271.3 95.6L270.5 97.4L270.7 98.7L269.2 98.5L266.3 96.8ZM259.4 94.0L259.7 90.8L259.4 89.8L261.0 89.3L262.0 90.8L261.6 93.6L260.7 94.0ZM260.0 88.1L260.0 86.5L261.3 85.4L261.5 87.6L261.0 88.9ZM284.0 101.4L285.1 100.8L288.5 101.4L288.3 102.0L285.9 102.2L284.0 101.6ZM298.2 102.0L299.3 101.4L301.9 100.6L300.9 102.0L299.3 102.8ZM250.1 92.7L251.2 92.1L251.7 92.7L251.0 93.3ZM329.0 -2.6L331.5 -0.6L334.7 -1.1L338.7 -2.6L336.3 -7.6L335.5 -15.8L342.7 -27.8L355.6 -36.6L356.4 -32.4L344.3 -21.6L339.5 -13.0L337.9 -5.1L335.5 -4.1L331.5 -5.1L329.0 -6.6ZM323.9 6.8L325.8 8.2L327.1 6.4L325.5 4.6ZM475.6 57.5L476.7 61.8L476.7 66.5L477.9 70.8L476.2 71.5L475.6 74.4L477.0 76.8L475.9 77.3L474.6 78.7L474.6 75.1L474.8 71.5L475.0 66.5L474.3 63.1L474.6 59.9ZM471.7 88.7L471.3 86.5L472.1 84.8L473.7 84.8L474.2 82.1L474.3 80.1L475.4 81.0L477.0 82.5L479.9 82.5L480.3 84.8L478.7 85.4L476.7 87.6L474.6 86.3L473.0 86.8L472.7 88.1ZM456.8 103.8L459.4 101.0L461.8 100.8L465.0 100.6L466.3 97.4L467.1 98.5L469.0 97.2L470.6 95.0L471.4 92.3L471.4 90.6L471.9 89.3L473.8 88.9L473.8 90.8L474.6 92.9L473.8 95.4L473.0 97.0L472.5 100.1L472.7 100.6L471.4 102.0L470.9 100.8L470.1 101.6L469.5 102.6L468.5 102.8L466.6 102.6L466.3 103.4L465.5 104.2L464.7 104.9L463.7 103.4L463.4 102.6L461.0 103.2L459.0 103.4L456.9 104.2ZM456.9 104.2L458.1 104.9L458.5 106.3L457.6 109.0L456.5 109.7L455.7 108.8L455.7 106.9L454.8 105.9L455.0 104.9L456.1 104.2ZM459.4 104.0L462.6 103.4L462.9 104.4L462.1 105.3L461.0 104.9L460.2 106.3L459.2 105.5ZM441.7 120.1L442.5 121.5L441.5 124.2L440.5 126.1L439.6 124.5L439.6 122.8L440.9 120.6ZM421.1 130.7L422.4 132.4L424.0 131.4L424.8 129.9L424.0 129.2L422.0 129.5ZM449.2 105.3L450.3 104.9L449.9 105.5ZM374.6 146.5L375.2 146.4L376.8 148.5L378.0 150.9L376.8 152.2L375.2 152.5L374.6 150.9L374.6 148.5ZM440.0 131.9L442.8 132.1L442.9 135.3L441.8 137.0L442.5 139.1L445.7 140.3L445.8 141.8L444.1 140.3L442.1 139.8L440.2 139.1L440.7 138.3L439.6 137.8L439.7 135.8L439.9 133.6ZM442.6 151.1L444.9 149.8L446.0 150.4L446.0 152.2L447.9 153.2L449.2 151.7L449.7 150.1L449.4 147.7L448.1 146.4L447.0 148.2L445.2 148.5L443.7 149.6ZM446.2 141.9L447.8 141.9L448.4 144.1L447.6 145.7L447.0 145.7L446.3 143.9ZM442.5 145.2L442.5 143.1L444.2 143.4L445.0 144.7L445.7 144.4L445.7 145.7L444.6 147.2L443.4 146.8L443.3 145.5ZM434.7 148.6L436.8 146.4L438.4 143.9L438.8 145.2L436.8 147.3L435.2 148.8ZM439.9 140.4L441.2 140.4L441.7 142.1L440.9 142.3ZM421.5 160.1L423.6 159.5L425.2 157.9L428.0 156.9L429.6 155.0L431.2 154.1L432.8 152.2L434.1 150.9L435.5 151.9L438.0 153.7L436.5 155.0L435.4 156.1L436.0 158.7L437.6 160.6L435.7 161.1L435.2 163.5L433.6 164.6L433.3 167.0L432.8 168.6L430.4 168.3L428.0 167.4L425.9 167.4L423.5 166.9L423.2 164.6L421.9 163.0L421.5 161.7ZM399.5 153.2L403.0 153.8L405.0 156.1L407.6 158.2L410.0 159.5L412.4 161.2L413.2 163.8L414.3 165.1L416.7 166.7L416.7 167.5L416.4 171.5L414.5 171.2L410.8 168.6L407.7 163.8L405.1 159.5L402.2 156.6L399.5 153.8ZM415.4 173.2L416.7 171.7L418.0 172.0L420.7 173.0L423.8 173.3L424.8 172.5L427.5 173.5L430.2 174.8L430.2 176.1L426.4 175.6L423.2 175.1L419.9 174.8L417.4 174.0ZM430.4 175.4L432.3 175.3L433.9 175.8L436.5 175.6L437.6 175.9L436.8 176.6L434.1 176.7L431.5 176.4ZM438.9 175.9L440.9 175.8L443.7 175.4L444.1 175.8L442.5 176.4L440.0 176.4ZM437.6 177.6L439.6 177.4L440.5 178.4L439.2 178.9ZM444.9 178.9L446.5 177.2L448.1 176.1L451.0 175.8L449.7 176.7L447.3 178.4L445.7 178.9ZM438.9 160.9L440.5 160.1L444.1 160.8L447.3 159.6L446.5 161.6L440.9 161.4L439.2 163.5L441.7 163.6L444.6 163.5L442.5 165.1L441.7 165.4L443.3 167.8L444.1 169.4L443.7 170.7L442.1 169.9L440.9 167.0L440.5 166.5L439.7 167.8L439.9 171.1L438.4 171.1L438.4 167.8L437.5 166.5L438.1 163.8L438.9 162.2ZM451.3 159.0L452.1 159.8L453.2 159.8L452.1 161.4L452.8 163.5L451.8 162.7L451.5 160.6ZM452.1 167.4L454.5 166.7L456.6 167.5L454.5 167.8ZM449.2 167.4L450.5 167.2L450.7 168.2L449.4 168.2ZM456.9 163.5L459.4 162.8L461.8 163.5L462.1 166.2L463.4 167.5L465.8 165.7L468.2 164.8L473.0 166.4L477.0 167.8L480.7 170.3L484.0 172.7L482.7 173.2L485.1 176.4L487.5 178.7L488.8 179.5L485.9 178.9L483.0 177.6L481.1 175.1L478.7 174.6L477.0 175.9L476.2 177.1L473.0 176.9L470.6 175.3L468.2 175.8L469.5 173.5L468.2 171.1L465.0 169.6L461.8 168.5L460.2 168.6L459.8 167.5L458.5 166.7L461.0 165.9L458.5 165.4L456.9 164.5ZM484.8 171.2L487.5 170.3L489.9 169.0L491.2 169.1L490.7 171.1L488.3 172.2L485.9 172.2ZM488.8 166.4L490.7 167.5L492.3 169.4L491.8 169.6L489.9 167.5ZM429.9 198.1L429.1 201.1L428.6 204.6L429.9 208.2L431.2 212.8L432.3 216.6L431.2 221.0L432.8 222.4L436.0 222.4L439.2 220.2L444.9 220.2L448.9 217.2L453.7 215.8L457.3 215.6L461.0 217.0L463.7 221.4L464.8 222.2L467.4 218.5L467.9 217.5L467.4 222.4L469.0 222.0L470.6 224.0L471.4 227.0L473.8 229.0L477.0 230.0L479.0 228.4L481.6 230.4L484.3 228.0L487.5 227.0L487.8 223.4L489.4 220.2L491.5 216.6L492.3 212.8L493.3 210.2L492.7 207.3L492.3 203.8L489.9 201.6L488.8 199.4L486.2 196.8L484.3 195.0L482.4 193.7L481.1 190.8L480.3 188.3L479.9 186.4L477.9 185.4L477.0 182.5L475.4 179.7L474.3 182.5L474.0 186.6L473.0 189.6L471.4 191.1L469.8 190.5L467.4 188.3L464.7 186.6L464.2 184.1L466.3 182.0L464.2 181.6L460.2 181.2L458.5 180.3L456.9 182.1L455.0 184.1L454.5 186.4L452.4 186.6L450.5 184.9L448.1 185.8L446.5 188.3L444.9 190.5L442.8 190.8L442.8 191.6L440.9 194.2L437.6 195.0L434.4 196.2L432.0 197.6ZM479.0 234.0L481.9 234.8L484.6 234.2L484.8 236.8L484.0 239.4L482.4 240.3L480.7 239.4L479.8 237.2L479.0 234.6ZM325.5 181.6L327.0 187.4L326.3 190.0L325.7 191.6L324.2 196.8L322.1 203.4L319.4 204.6L317.0 203.8L316.2 201.1L316.2 197.6L317.5 195.0L317.0 191.6L317.8 188.6L320.7 187.8L323.1 186.1L324.2 184.1ZM109.5 126.1L112.7 124.2L113.6 124.0L117.5 124.2L121.5 126.4L124.7 128.2L126.8 129.0L124.7 129.5L121.2 129.7L122.0 128.3L119.9 126.8L116.7 125.9L114.3 125.2L111.9 125.6L110.3 126.3ZM126.5 132.1L128.1 129.5L130.4 129.5L133.6 129.7L136.2 131.7L133.6 132.2L131.2 133.3L129.6 132.4ZM120.2 132.2L122.3 131.9L123.6 132.8L122.0 133.1ZM138.1 132.1L140.5 132.1L140.3 132.8L138.1 132.8ZM146.8 144.9L148.1 144.7L148.1 145.9L146.6 145.9ZM148.1 259.2L151.3 258.7L153.2 259.4L152.1 261.0L148.9 261.0ZM-43.4 369.8L-11.2 369.8L4.9 355.5L21.0 349.1L37.1 343.1L53.2 341.9L69.2 346.0L85.3 334.7L101.4 337.4L117.5 337.4L125.5 329.5L132.0 322.2L136.8 315.3L138.4 309.0L140.8 304.9L143.2 301.0L146.5 298.0L150.5 295.5L155.3 294.8L154.5 298.0L151.3 301.0L148.9 304.9L148.1 311.0L149.7 317.6L154.5 323.6L160.9 328.0L159.3 337.4L152.9 349.1L165.8 369.8L189.9 369.8L201.2 355.5L214.0 340.2L226.9 329.5L233.3 325.5L246.2 321.2L254.2 322.2L262.3 322.2L270.3 319.8L278.4 322.2L286.4 323.1L294.5 319.8L299.3 316.2L307.3 321.2L310.5 317.6L318.6 312.3L326.6 309.0L333.1 304.5L337.9 306.9L342.7 310.2L350.8 311.9L357.2 312.3L358.8 315.3L362.0 319.8L366.9 320.8L371.7 314.5L374.9 312.3L382.9 308.1L391.0 307.3L399.0 306.1L407.1 304.1L415.1 306.1L423.2 304.9L431.2 306.5L439.2 308.1L447.3 306.1L455.3 304.9L463.4 304.9L471.4 307.7L479.5 309.0L487.5 314.5L495.5 317.6L503.6 322.2L511.6 325.5L519.7 329.5L535.8 369.8L535.8 450.8L-43.4 450.8ZM356.9 252.9L359.1 253.1L359.3 254.4L357.2 254.6ZM185.1 265.8L188.3 266.6L188.6 268.0L185.9 266.9ZM332.1 141.8L333.9 141.8L333.6 142.3L332.3 142.1ZM395.3 140.3L395.8 140.6L395.5 143.4L395.0 143.1Z" fill="#f2efe9" stroke="#e3dfd6" stroke-width="0.3" stroke-linejoin="round"/><path d="M322.6 79.8L325.0 77.5L328.2 76.3L331.5 76.8L331.5 80.3L328.6 81.0L328.2 82.1L327.1 82.5L329.0 85.0L331.1 86.5L330.7 88.7L332.3 89.8L331.5 91.9L332.3 94.0L332.7 97.4L329.9 98.5L327.1 97.4L325.0 96.8L324.7 95.0L325.8 91.3L327.1 91.0L325.5 89.1L323.4 87.0L322.6 85.4L322.3 82.5L321.5 81.4ZM340.0 81.6L341.1 78.7L343.5 77.5L344.3 78.7L342.4 81.0L341.1 83.2ZM364.4 79.8L366.0 77.0L370.1 77.3L373.3 76.8L373.0 78.0L369.3 78.2L366.5 79.4ZM413.0 65.2L415.1 63.1L418.0 60.5L420.7 57.2L422.4 53.5L423.2 53.8L422.4 57.8L419.9 61.3L417.2 63.9L414.8 65.5ZM297.2 162.5L298.5 161.6L300.9 161.7L302.0 163.3L300.6 165.4L299.6 166.5L297.7 166.5L297.2 164.6ZM293.2 167.7L293.7 167.7L294.0 170.3L295.3 173.5L295.9 176.1L295.4 176.4L293.8 173.5L293.2 170.7ZM300.9 177.7L301.4 177.7L302.0 180.8L302.5 184.1L302.5 185.6L301.9 184.9L301.4 181.6ZM294.9 40.8L296.9 40.8L299.3 38.2L298.5 35.9L296.1 35.2L294.5 37.5ZM98.2 77.0L100.6 77.0L103.8 76.6L105.4 77.5L107.9 77.5L110.1 77.5L109.9 75.1L107.9 74.0L107.0 72.3L104.2 71.8L102.2 74.0L100.6 75.1ZM105.0 87.6L106.2 88.5L107.4 86.5L107.4 83.2L108.7 81.0L109.8 79.1L108.7 78.7L106.2 79.6L104.6 82.1L105.3 84.3ZM110.3 78.9L111.9 80.5L112.2 83.2L113.5 85.4L114.8 84.8L114.9 82.1L115.9 81.6L117.5 82.1L116.7 80.3L115.1 78.7L112.7 78.2L111.1 78.2ZM112.0 88.3L114.3 88.7L116.7 87.6L119.1 85.9L118.6 85.7L115.9 86.1L113.5 87.4ZM117.8 84.8L119.9 84.8L122.7 84.6L123.6 83.2L121.5 83.2L118.8 83.7ZM90.2 68.0L91.3 67.5L90.5 65.2L89.8 62.6L88.5 59.1L86.6 59.4L87.7 62.6L88.2 64.7L90.2 66.0ZM45.1 22.6L48.3 23.4L51.5 21.0L56.4 22.2L57.2 18.3L54.0 15.4L51.5 17.5L48.3 18.3L45.9 19.5ZM58.0 37.5L61.2 38.2L64.4 36.5L66.8 34.2L70.0 31.8L68.4 31.0L64.4 33.1L60.4 33.1L58.8 35.9ZM108.0 144.1L109.5 144.4L109.8 143.2L108.7 142.6ZM130.7 144.9L131.7 144.7L132.0 146.8L131.0 147.5L130.2 146.4Z" fill="#aad3df"/><path d="M19.4 4.1L19.4 39.8L22.6 40.8L25.0 44.3L28.2 41.8L31.4 45.8L34.2 51.2L37.1 53.0L37.1 55.8M48.3 71.5L93.1 71.5L94.0 72.3L99.0 73.7L102.2 74.0L104.0 73.2L109.8 76.8L110.3 77.5L111.9 78.7L113.5 80.3L113.6 85.4L112.5 87.2L113.5 88.3L119.1 85.9L119.0 84.6L122.7 84.1L125.5 81.0L131.2 81.0L133.1 78.9L134.9 75.4L136.8 75.6L137.1 79.4L138.4 81.0M57.8 106.9L61.7 106.5L67.6 109.1L72.1 109.1L72.1 108.2L74.9 108.2L78.1 112.3L80.5 113.4L81.3 111.9L83.7 112.3L86.1 116.2L86.9 118.1L89.8 119.0M97.9 138.6L98.7 136.0L100.8 136.0L99.8 134.1L99.8 133.1L102.7 133.1L102.7 136.3L103.2 136.3M102.7 133.1L104.2 131.9M101.3 139.8L102.5 138.8L103.8 139.1L105.0 140.4M102.5 138.8L102.7 136.3M105.8 141.1L107.9 139.5L110.3 138.3L112.4 137.8M108.3 144.2L111.6 144.6M112.8 149.1L113.3 146.8M120.9 150.6L121.8 148.2M129.1 129.9L130.7 131.7L130.9 133.1M131.5 143.1L129.9 144.2L128.8 147.2L129.7 148.8L130.4 150.6L133.6 150.9L137.6 152.2L137.1 155.0L138.4 159.0L138.4 160.3M119.4 159.9L121.5 161.1L125.1 162.4M125.1 162.4L128.0 165.9L133.1 166.2L133.6 169.0M117.0 167.7L118.3 169.4L119.9 169.9L120.7 167.5L123.9 166.2L125.1 162.4M160.3 219.8L156.9 214.7L153.5 213.2L156.4 209.7L159.7 207.7L158.4 204.8L158.8 202.0L156.8 199.0L153.1 198.7L153.2 195.0L152.6 190.8L149.7 188.8L148.9 184.6L145.7 183.3L141.2 180.8L141.2 178.0L134.4 180.0L132.6 177.6L129.1 177.6L127.2 174.3L128.8 170.3L133.6 169.1L134.6 164.3L133.9 160.6L138.4 160.3L138.4 159.0L143.2 159.0L142.4 155.8L148.1 155.0L148.6 153.8L149.7 155.8L150.0 159.8L154.5 159.0L158.5 158.5L162.5 158.7L163.2 155.4M148.6 153.8L147.6 152.5L149.7 148.8M154.5 159.0L152.9 155.8L154.2 152.7M158.5 158.5L159.0 155.8L159.3 152.9M134.4 180.0L135.2 183.3L135.2 187.1L134.4 188.6L134.4 190.8L133.1 192.3M134.4 190.8L136.0 194.2L136.5 197.6L137.6 199.9L140.0 198.1L142.4 199.4L145.3 198.8L146.5 195.9L150.5 193.9L152.6 195.0M145.3 198.8L149.7 202.0L153.4 204.3L152.1 207.7L156.1 207.9L158.4 204.8M153.5 213.2L152.6 217.5L152.3 220.4M137.6 199.9L136.0 202.9L136.3 207.3L133.9 212.8L133.6 218.5L132.8 224.3L132.0 230.4L130.7 236.8L130.9 243.4L129.6 250.4L128.8 256.6L130.4 260.5L136.0 261.3M135.8 262.3L135.8 268.3M232.0 87.8L233.0 87.6L235.7 87.8L235.1 89.8L234.9 92.5L234.1 92.7L234.9 95.6L234.3 97.6M243.3 84.6L247.3 86.1L251.3 86.8M258.3 83.7L257.5 81.0L257.5 78.9M255.9 78.2L257.5 78.9L259.9 78.7L262.9 77.5L261.6 75.1L259.9 74.7L258.4 74.9L256.0 77.5L255.9 78.2M258.4 74.9L259.4 71.5L256.5 70.3L255.5 70.3L253.0 69.0L250.2 66.3M256.5 70.3L255.9 67.0L255.9 64.5L257.5 63.1L257.8 60.5M251.7 65.5L254.2 65.5L255.9 67.0M269.2 58.9L269.8 63.9L270.3 66.5L265.8 68.3L268.4 72.0L267.1 75.1L262.9 75.1L261.6 75.1M262.9 76.8L265.8 76.3L268.2 77.5L268.2 79.6M260.2 56.1L262.0 56.4M270.3 66.5L273.5 68.3L276.4 70.3L282.4 71.3L284.8 67.0L284.2 62.4L284.0 58.6L282.9 57.5L278.1 57.5M268.4 72.0L270.3 71.5L273.5 72.3L276.4 70.3M273.5 72.3L273.7 74.0L272.1 76.6L272.7 77.7L268.2 77.5M282.9 57.5L287.2 58.0L289.3 55.0L291.6 52.4L290.8 48.9L290.3 47.1L291.2 42.4M280.0 52.7L288.0 52.4M285.3 47.4L290.3 48.3M280.0 55.0L282.9 55.8L282.9 57.5M284.2 65.0L289.6 65.0L295.4 65.5L297.4 63.7M291.6 52.4L296.1 55.8L298.5 59.9L297.4 63.7L300.9 63.1L303.3 67.8L307.3 69.3L310.5 70.0L310.2 74.2L307.7 76.1M282.4 71.3L281.9 73.0L285.6 74.2L289.0 73.2L291.2 79.8L294.0 80.3M289.0 73.2L291.2 73.5L294.5 77.5L291.6 79.8M281.9 74.0L278.9 78.2L280.8 81.4L282.7 82.8L289.6 83.0L292.2 83.9M273.7 74.0L276.4 74.4L278.4 73.5L281.9 73.0M272.7 77.7L276.4 78.9L278.9 78.2M276.4 78.9L276.8 81.2L277.4 84.3L276.0 86.5M271.6 80.5L273.5 80.5L276.8 81.2M271.9 84.3L271.6 80.5M277.4 84.3L279.2 85.4L278.4 86.5L277.4 87.8M279.2 85.4L282.2 87.0M278.4 86.5L279.3 89.8L278.4 92.5M279.3 89.8L280.0 90.0L283.2 89.1L288.5 88.3L288.0 90.0M288.5 88.3L291.2 87.6M282.7 82.8L282.2 87.0L283.2 89.1M264.2 44.0L266.0 40.2L265.8 35.9L265.8 30.7L268.7 26.0L269.5 19.5L272.4 13.4L275.2 9.1L278.9 6.4L287.7 7.3L291.2 1.8L292.9 6.4M285.1 20.3L284.3 13.4L280.0 7.7L278.9 6.4M290.9 39.2L294.5 34.2L296.9 30.7L294.1 23.4L294.0 15.4L292.4 9.1L295.7 4.1M234.5 55.8L233.3 57.5L235.9 58.3M242.7 101.8L243.5 105.9L240.6 108.8L237.4 111.9L232.2 114.0L232.2 116.5L238.5 120.6L248.1 127.5L251.3 130.2L253.0 130.9L258.3 127.8L265.5 123.3L261.5 118.3L262.0 111.6L260.7 107.8L259.4 105.9L259.7 98.3M261.5 111.0L264.7 105.5M225.3 115.8L232.2 115.8L232.2 118.9L226.9 118.9L226.9 123.3L225.3 124.2L225.3 127.1L218.9 127.1M238.5 120.6L235.7 120.6L237.4 135.3L237.7 137.0L227.7 137.0L226.6 138.1M265.5 123.3L270.3 124.2L284.8 130.2L284.8 136.6L282.4 139.5L282.4 144.4L284.0 147.7M286.4 108.6L286.4 125.9L305.6 125.9M286.4 125.9L286.4 129.4L284.8 129.4L284.8 130.2M270.3 124.2L271.1 129.4L271.1 135.3L267.9 139.5L268.1 139.9L269.5 141.4L271.1 146.0L268.7 146.0L271.1 150.1L276.8 147.7L282.4 144.4M268.1 139.9L260.7 141.4L252.6 140.3L252.0 143.2M253.0 130.9L253.0 135.3L251.8 137.1L247.0 137.8L246.5 138.6L249.4 141.6L250.1 142.4L252.0 143.2L250.5 151.9M247.0 137.8L242.2 139.1L239.0 141.6L237.4 145.4L241.7 146.5L241.7 144.4L246.2 144.4L247.6 144.4L250.1 142.4M237.4 145.4L233.3 145.7L232.8 149.9L234.1 155.1M241.7 146.5L241.1 154.0M246.2 144.4L247.0 148.5L248.1 152.4M247.6 144.4L248.8 152.2M233.3 145.7L232.5 143.6L227.9 142.4L224.2 141.8L222.1 144.4M219.7 136.1L222.9 135.1L226.6 138.1L227.9 142.4M224.8 147.7L229.0 146.0L229.6 148.5L227.7 151.1M229.6 148.5L232.8 149.9M219.3 142.1L222.1 141.8L224.2 141.8M219.2 140.1L223.7 140.3L219.2 140.9M259.9 154.6L262.3 151.1L265.2 150.9L267.4 146.8L269.0 143.9L269.5 141.4M271.1 150.1L269.5 154.1L271.9 158.7L267.6 158.7L264.4 158.7L262.0 158.5M267.6 158.7L269.5 160.6L269.5 163.0L268.7 166.2L265.2 167.0L264.2 168.5M264.4 158.7L264.4 160.6L262.0 160.6M271.9 158.7L276.1 156.6L276.1 155.3L282.4 155.6L287.2 153.8L290.3 154.1M276.1 156.6L274.8 163.0L271.9 166.2L270.8 169.1L267.1 169.6L266.0 171.5M284.0 147.7L285.6 149.3L290.3 154.1L295.7 156.6L300.9 155.4L303.0 154.8L304.1 155.0M284.0 147.7L291.2 146.8L299.3 146.0L301.1 146.8L299.4 149.3L303.0 153.7L304.1 155.0M301.1 146.8L303.3 141.9L304.9 139.0L305.7 134.4L308.3 132.8M304.9 139.0L308.9 138.5L314.4 141.9L313.4 144.4L315.4 144.4L315.1 146.0L318.6 148.5L323.3 149.3L318.6 154.1L313.8 155.4L312.2 155.9L309.7 156.6L307.3 156.4L304.1 155.0M312.2 155.9L312.2 163.5L313.0 164.9M300.9 155.4L302.5 159.5L300.9 162.2L300.9 163.8L306.8 167.0L309.3 169.8M295.7 156.6L296.6 158.7L294.0 161.4L293.8 164.5L295.3 163.8L300.9 163.8M293.8 164.5L292.9 166.5L293.3 169.3L295.3 169.3L295.7 166.1L295.3 163.8M296.1 176.1L299.1 177.4L300.9 177.6M302.3 180.8L307.3 180.5L311.2 179.2M266.0 171.5L267.1 171.7L272.9 171.7L274.4 175.1L278.4 173.5L281.3 174.0L281.6 180.0L284.8 180.0L284.8 183.3L281.6 183.3L281.6 188.6L283.8 191.0M284.8 180.0L284.8 181.6L288.0 181.5L290.4 182.1L292.9 184.0L294.1 182.0L291.9 181.3L292.0 177.2L295.6 175.4M265.2 190.5L268.7 190.6L276.0 190.6L283.8 191.0L286.9 191.3M280.0 191.6L280.0 198.5L278.4 198.5L278.4 203.4L278.4 209.9L272.7 210.2M278.4 203.4L279.7 207.0L283.2 204.3L287.2 205.0L289.5 201.5L293.5 198.8L296.6 199.2L297.7 202.9L297.5 205.4L297.8 207.0L299.1 207.2M286.9 191.3L288.0 194.2L290.8 195.9L293.5 198.8M286.9 191.3L289.6 191.6L292.7 188.3L295.1 187.6L299.1 189.5L299.0 194.2L298.3 197.3L296.6 199.2M289.6 212.1L292.0 210.2L293.5 211.7L291.7 213.9L289.6 212.1M295.1 187.6L294.8 186.3L299.6 184.9L299.1 177.4M299.6 184.9L301.7 185.8L304.0 189.1L303.0 190.1L301.5 188.8M304.4 100.1L305.2 98.5L307.3 98.5L314.2 97.6L318.3 97.6L317.3 93.1L318.3 92.5M313.0 88.7L316.2 89.6L316.5 91.7L318.3 92.5L321.0 94.2L323.4 93.1L324.9 95.2M310.5 84.6L315.4 86.3L321.0 88.1L324.4 88.1M316.2 89.6L318.6 89.1L321.0 88.1M318.6 89.1L319.4 90.8L321.0 94.2M314.2 97.6L312.5 102.6L308.6 105.1L305.4 107.2L303.6 106.5M308.6 105.1L309.3 107.4L305.7 108.8L307.3 110.6L304.1 113.1L302.5 112.5M301.2 109.1L302.3 112.5M303.5 106.5L303.3 108.8L302.5 112.5M302.7 105.7L303.8 105.3L305.1 103.6L304.1 102.8M309.3 107.4L313.8 109.3L318.1 113.1L321.0 113.2L322.9 114.3L324.1 114.3M318.3 97.6L319.2 100.1L320.2 101.8L319.2 104.0L320.2 105.9L323.1 108.2L323.4 110.6L324.4 111.8M321.0 113.2L322.9 111.4L323.4 111.6M315.1 135.5L317.0 133.8L321.8 134.4L325.0 131.7L329.9 131.1L334.7 129.4L335.8 125.9L335.0 124.7L330.8 124.3L329.2 121.9M329.9 131.1L331.6 134.9M335.0 124.7L336.3 122.2L336.8 120.6M327.9 121.2L328.6 121.4M332.9 97.4L336.6 95.8L340.3 96.6L344.7 98.9L343.5 104.0L344.2 108.8L345.6 109.0L344.2 111.9L347.5 116.7L345.3 120.3M344.2 111.9L352.9 111.9L357.7 108.0L358.8 104.0L361.2 99.5L366.7 97.6M344.7 100.8L350.0 99.5L353.2 97.2L355.6 98.1L360.4 95.2L361.5 98.7L366.7 97.6M355.9 122.9L360.4 121.4L358.8 115.6L363.6 111.6L366.0 108.4L365.2 105.9L370.1 102.0L371.4 101.0M366.7 97.6L371.4 101.0L373.3 106.9L376.5 111.2L387.9 115.4L389.4 116.5L394.2 115.6L402.2 114.7M375.1 113.8L379.7 116.3L387.8 118.1L387.9 115.4M389.4 117.4L394.2 117.2L394.2 115.6M387.9 118.1L389.1 121.9L389.4 125.9M389.1 118.9L394.5 120.5L392.9 122.9L394.7 124.2L394.7 127.6M395.2 125.9L396.3 122.4L399.0 117.6L402.2 114.7L405.0 119.2L403.2 122.4L406.3 124.3L409.0 127.3M409.0 127.3L407.2 128.7L403.5 131.9L405.3 135.6L404.2 137.8L405.8 141.8L405.0 145.7M407.2 128.7L408.7 133.4L410.4 132.4L413.5 132.2L414.8 135.3L416.1 138.8L411.9 139.1L411.1 141.9L411.7 143.2M410.6 125.2L413.5 128.7L415.4 131.4L417.8 135.3L419.3 137.8L419.1 138.6L419.1 142.3L416.4 143.6L414.3 145.4M416.1 138.8L419.1 138.6M419.9 126.8L417.5 124.5L415.6 123.6L410.6 125.2L409.0 127.3M407.2 151.9L408.8 153.0L410.4 152.2M422.5 159.0L424.0 160.8L426.7 159.9L430.9 159.1L432.5 155.3L435.2 155.4M473.0 166.4L473.0 176.9M445.7 177.2L447.3 177.1L447.6 178.2M429.8 154.8L430.9 155.8L431.7 154.3M387.4 71.0L392.6 80.5L399.8 83.2L401.3 86.1L408.7 86.3L415.1 88.5L424.0 86.1L426.4 83.7L426.2 81.0L432.3 79.8L438.8 77.0L432.8 74.2L433.9 69.5M387.4 71.0L394.2 67.0L404.3 67.8L403.0 69.5L405.3 63.7L410.8 65.7L410.6 67.8L418.3 69.0L423.2 71.0L430.4 68.5L433.9 69.5L435.7 70.3L438.4 67.8L439.2 62.4L441.7 60.5L448.3 61.3L451.3 69.0L456.1 72.0L456.9 74.7L462.9 73.2L460.2 81.0L456.9 81.0L456.9 85.4L456.5 87.0L452.1 87.6L450.3 88.1L446.2 91.9M449.1 96.6L452.8 94.8M387.4 71.0L383.7 76.3L379.7 75.9L378.9 80.3L374.9 81.0L375.4 85.4L375.2 87.2L369.9 89.8L364.8 92.7L364.6 94.0L366.7 97.6M324.2 77.5L321.3 73.0L321.8 69.3L324.4 67.5L329.0 65.2L335.5 67.5L340.3 66.5L345.3 65.7L344.7 61.3L345.1 58.9L351.1 57.8L357.2 55.0L360.1 55.0L360.7 58.3L364.4 58.6L369.7 57.8L371.5 60.8L374.9 67.0L380.4 66.5L383.3 70.0L386.6 71.3M330.5 87.6L334.2 87.6L336.3 89.1L336.3 81.0L340.5 79.6L344.3 82.5L346.3 84.3L352.1 85.7L352.5 87.8L355.6 89.8L359.6 87.6L360.4 87.0L364.4 85.4L367.7 85.7L375.2 87.2M336.3 89.1L337.9 89.1L340.5 86.1L342.7 87.2L345.8 89.3L346.7 92.1L349.5 94.2L353.2 97.2M355.6 98.1L355.3 92.9L359.6 91.9L364.8 92.7M359.6 91.9L360.4 87.0" fill="none" stroke="#d3a3cf" stroke-width="0.45" stroke-linejoin="round" opacity="0.85"/><circle cx="50.5" cy="72.0" r="5.9" fill="#a8174c" fill-opacity="0.25" stroke="#a5164a" stroke-width="1.1"/><circle cx="48.9" cy="84.5" r="5.9" fill="#a8174c" fill-opacity="0.25" stroke="#a5164a" stroke-width="1.1"/><circle cx="49.9" cy="98.1" r="5.9" fill="#a8174c" fill-opacity="0.25" stroke="#a5164a" stroke-width="1.1"/><circle cx="49.2" cy="97.3" r="5.9" fill="#a8174c" fill-opacity="0.25" stroke="#a5164a" stroke-width="1.1"/><circle cx="50.8" cy="99.0" r="5.9" fill="#a8174c" fill-opacity="0.25" stroke="#a5164a" stroke-width="1.1"/><circle cx="56.3" cy="105.5" r="5.9" fill="#a8174c" fill-opacity="0.25" stroke="#a5164a" stroke-width="1.1"/><circle cx="69.5" cy="117.5" r="5.9" fill="#a8174c" fill-opacity="0.25" stroke="#a5164a" stroke-width="1.1"/><circle cx="87.3" cy="131.8" r="5.9" fill="#a8174c" fill-opacity="0.25" stroke="#a5164a" stroke-width="1.1"/><circle cx="89.3" cy="97.6" r="5.9" fill="#a8174c" fill-opacity="0.25" stroke="#a5164a" stroke-width="1.1"/><circle cx="92.6" cy="100.8" r="5.9" fill="#a8174c" fill-opacity="0.25" stroke="#a5164a" stroke-width="1.1"/><circle cx="90.8" cy="107.4" r="5.9" fill="#a8174c" fill-opacity="0.25" stroke="#a5164a" stroke-width="1.1"/><circle cx="90.4" cy="106.7" r="5.9" fill="#a8174c" fill-opacity="0.25" stroke="#a5164a" stroke-width="1.1"/><circle cx="113.5" cy="93.6" r="5.9" fill="#a8174c" fill-opacity="0.25" stroke="#a5164a" stroke-width="1.1"/><circle cx="111.5" cy="105.4" r="5.9" fill="#a8174c" fill-opacity="0.25" stroke="#a5164a" stroke-width="1.1"/><circle cx="128.7" cy="80.5" r="5.9" fill="#a8174c" fill-opacity="0.25" stroke="#a5164a" stroke-width="1.1"/><circle cx="118.1" cy="85.0" r="5.9" fill="#a8174c" fill-opacity="0.25" stroke="#a5164a" stroke-width="1.1"/><circle cx="118.6" cy="85.5" r="5.9" fill="#a8174c" fill-opacity="0.25" stroke="#a5164a" stroke-width="1.1"/><circle cx="127.9" cy="91.2" r="5.9" fill="#a8174c" fill-opacity="0.25" stroke="#a5164a" stroke-width="1.1"/><circle cx="129.7" cy="89.5" r="5.9" fill="#a8174c" fill-opacity="0.25" stroke="#a5164a" stroke-width="1.1"/><circle cx="132.7" cy="88.8" r="5.9" fill="#a8174c" fill-opacity="0.25" stroke="#a5164a" stroke-width="1.1"/><circle cx="125.5" cy="93.0" r="5.9" fill="#a8174c" fill-opacity="0.25" stroke="#a5164a" stroke-width="1.1"/><circle cx="130.4" cy="90.9" r="5.9" fill="#a8174c" fill-opacity="0.25" stroke="#a5164a" stroke-width="1.1"/><circle cx="134.0" cy="133.6" r="5.9" fill="#a8174c" fill-opacity="0.25" stroke="#a5164a" stroke-width="1.1"/><circle cx="111.5" cy="147.7" r="5.9" fill="#a8174c" fill-opacity="0.25" stroke="#a5164a" stroke-width="1.1"/><circle cx="125.1" cy="146.5" r="5.9" fill="#a8174c" fill-opacity="0.25" stroke="#a5164a" stroke-width="1.1"/><circle cx="124.7" cy="155.6" r="5.9" fill="#a8174c" fill-opacity="0.25" stroke="#a5164a" stroke-width="1.1"/><circle cx="123.5" cy="157.5" r="5.9" fill="#a8174c" fill-opacity="0.25" stroke="#a5164a" stroke-width="1.1"/><circle cx="169.0" cy="175.3" r="5.9" fill="#a8174c" fill-opacity="0.25" stroke="#a5164a" stroke-width="1.1"/><circle cx="177.8" cy="171.7" r="5.9" fill="#a8174c" fill-opacity="0.25" stroke="#a5164a" stroke-width="1.1"/><circle cx="190.3" cy="172.9" r="5.9" fill="#a8174c" fill-opacity="0.25" stroke="#a5164a" stroke-width="1.1"/><circle cx="167.3" cy="190.4" r="5.9" fill="#a8174c" fill-opacity="0.25" stroke="#a5164a" stroke-width="1.1"/><circle cx="158.7" cy="196.4" r="5.9" fill="#a8174c" fill-opacity="0.25" stroke="#a5164a" stroke-width="1.1"/><circle cx="163.5" cy="198.8" r="5.9" fill="#a8174c" fill-opacity="0.25" stroke="#a5164a" stroke-width="1.1"/><circle cx="171.8" cy="202.3" r="5.9" fill="#a8174c" fill-opacity="0.25" stroke="#a5164a" stroke-width="1.1"/><circle cx="177.4" cy="201.1" r="5.9" fill="#a8174c" fill-opacity="0.25" stroke="#a5164a" stroke-width="1.1"/><circle cx="153.9" cy="205.2" r="5.9" fill="#a8174c" fill-opacity="0.25" stroke="#a5164a" stroke-width="1.1"/><circle cx="157.0" cy="219.6" r="5.9" fill="#a8174c" fill-opacity="0.25" stroke="#a5164a" stroke-width="1.1"/><circle cx="152.7" cy="222.7" r="5.9" fill="#a8174c" fill-opacity="0.25" stroke="#a5164a" stroke-width="1.1"/><circle cx="152.3" cy="222.2" r="5.9" fill="#a8174c" fill-opacity="0.25" stroke="#a5164a" stroke-width="1.1"/><circle cx="241.2" cy="98.7" r="5.9" fill="#a8174c" fill-opacity="0.25" stroke="#a5164a" stroke-width="1.1"/><circle cx="240.8" cy="66.3" r="5.9" fill="#a8174c" fill-opacity="0.25" stroke="#a5164a" stroke-width="1.1"/><circle cx="245.1" cy="66.3" r="5.9" fill="#a8174c" fill-opacity="0.25" stroke="#a5164a" stroke-width="1.1"/><circle cx="248.0" cy="68.2" r="5.9" fill="#a8174c" fill-opacity="0.25" stroke="#a5164a" stroke-width="1.1"/><circle cx="254.7" cy="64.6" r="5.9" fill="#a8174c" fill-opacity="0.25" stroke="#a5164a" stroke-width="1.1"/><circle cx="250.3" cy="73.0" r="5.9" fill="#a8174c" fill-opacity="0.25" stroke="#a5164a" stroke-width="1.1"/><circle cx="247.5" cy="70.5" r="5.9" fill="#a8174c" fill-opacity="0.25" stroke="#a5164a" stroke-width="1.1"/><circle cx="261.1" cy="67.0" r="5.9" fill="#a8174c" fill-opacity="0.25" stroke="#a5164a" stroke-width="1.1"/><circle cx="262.3" cy="70.2" r="5.9" fill="#a8174c" fill-opacity="0.25" stroke="#a5164a" stroke-width="1.1"/><circle cx="259.4" cy="79.0" r="5.9" fill="#a8174c" fill-opacity="0.25" stroke="#a5164a" stroke-width="1.1"/><circle cx="265.9" cy="85.0" r="5.9" fill="#a8174c" fill-opacity="0.25" stroke="#a5164a" stroke-width="1.1"/><circle cx="280.8" cy="64.2" r="5.9" fill="#a8174c" fill-opacity="0.25" stroke="#a5164a" stroke-width="1.1"/><circle cx="281.5" cy="76.1" r="5.9" fill="#a8174c" fill-opacity="0.25" stroke="#a5164a" stroke-width="1.1"/><circle cx="283.9" cy="86.7" r="5.9" fill="#a8174c" fill-opacity="0.25" stroke="#a5164a" stroke-width="1.1"/><circle cx="284.4" cy="97.0" r="5.9" fill="#a8174c" fill-opacity="0.25" stroke="#a5164a" stroke-width="1.1"/><circle cx="295.4" cy="68.7" r="5.9" fill="#a8174c" fill-opacity="0.25" stroke="#a5164a" stroke-width="1.1"/><circle cx="304.7" cy="69.9" r="5.9" fill="#a8174c" fill-opacity="0.25" stroke="#a5164a" stroke-width="1.1"/><circle cx="310.2" cy="80.2" r="5.9" fill="#a8174c" fill-opacity="0.25" stroke="#a5164a" stroke-width="1.1"/><circle cx="317.4" cy="79.0" r="5.9" fill="#a8174c" fill-opacity="0.25" stroke="#a5164a" stroke-width="1.1"/><circle cx="328.9" cy="101.8" r="5.9" fill="#a8174c" fill-opacity="0.25" stroke="#a5164a" stroke-width="1.1"/><circle cx="333.7" cy="123.8" r="5.9" fill="#a8174c" fill-opacity="0.25" stroke="#a5164a" stroke-width="1.1"/><circle cx="292.2" cy="206.7" r="5.9" fill="#a8174c" fill-opacity="0.25" stroke="#a5164a" stroke-width="1.1"/><circle cx="285.0" cy="211.5" r="5.9" fill="#a8174c" fill-opacity="0.25" stroke="#a5164a" stroke-width="1.1"/><circle cx="351.5" cy="51.3" r="6.2" fill="#a8174c" fill-opacity="0.25" stroke="#a5164a" stroke-width="1.1"/><circle cx="383.6" cy="52.5" r="5.9" fill="#a8174c" fill-opacity="0.25" stroke="#a5164a" stroke-width="1.1"/><circle cx="387.2" cy="84.8" r="5.9" fill="#a8174c" fill-opacity="0.25" stroke="#a5164a" stroke-width="1.1"/><circle cx="358.8" cy="125.1" r="5.9" fill="#a8174c" fill-opacity="0.25" stroke="#a5164a" stroke-width="1.1"/><circle cx="368.4" cy="125.3" r="5.9" fill="#a8174c" fill-opacity="0.25" stroke="#a5164a" stroke-width="1.1"/><circle cx="370.3" cy="130.1" r="5.9" fill="#a8174c" fill-opacity="0.25" stroke="#a5164a" stroke-width="1.1"/><circle cx="371.2" cy="142.3" r="5.9" fill="#a8174c" fill-opacity="0.25" stroke="#a5164a" stroke-width="1.1"/><circle cx="383.8" cy="117.1" r="5.9" fill="#a8174c" fill-opacity="0.25" stroke="#a5164a" stroke-width="1.1"/><circle cx="391.6" cy="124.4" r="5.9" fill="#a8174c" fill-opacity="0.25" stroke="#a5164a" stroke-width="1.1"/><circle cx="404.3" cy="127.1" r="5.9" fill="#a8174c" fill-opacity="0.25" stroke="#a5164a" stroke-width="1.1"/><circle cx="416.7" cy="128.7" r="5.9" fill="#a8174c" fill-opacity="0.25" stroke="#a5164a" stroke-width="1.1"/><circle cx="408.2" cy="140.5" r="5.9" fill="#a8174c" fill-opacity="0.25" stroke="#a5164a" stroke-width="1.1"/><circle cx="407.8" cy="140.2" r="5.9" fill="#a8174c" fill-opacity="0.25" stroke="#a5164a" stroke-width="1.1"/><circle cx="414.5" cy="110.7" r="5.9" fill="#a8174c" fill-opacity="0.25" stroke="#a5164a" stroke-width="1.1"/><circle cx="415.2" cy="111.0" r="5.9" fill="#a8174c" fill-opacity="0.25" stroke="#a5164a" stroke-width="1.1"/><circle cx="433.6" cy="93.7" r="11.2" fill="#a8174c" fill-opacity="0.25" stroke="#a5164a" stroke-width="1.1"/><circle cx="435.0" cy="94.9" r="6.4" fill="#a8174c" fill-opacity="0.25" stroke="#a5164a" stroke-width="1.1"/><circle cx="428.8" cy="103.8" r="5.9" fill="#a8174c" fill-opacity="0.25" stroke="#a5164a" stroke-width="1.1"/><circle cx="437.1" cy="98.8" r="5.9" fill="#a8174c" fill-opacity="0.25" stroke="#a5164a" stroke-width="1.1"/><circle cx="439.4" cy="99.2" r="5.9" fill="#a8174c" fill-opacity="0.25" stroke="#a5164a" stroke-width="1.1"/><circle cx="437.0" cy="108.7" r="5.9" fill="#a8174c" fill-opacity="0.25" stroke="#a5164a" stroke-width="1.1"/><circle cx="432.2" cy="112.3" r="5.9" fill="#a8174c" fill-opacity="0.25" stroke="#a5164a" stroke-width="1.1"/><circle cx="427.4" cy="115.9" r="5.9" fill="#a8174c" fill-opacity="0.25" stroke="#a5164a" stroke-width="1.1"/><circle cx="440.6" cy="110.7" r="5.9" fill="#a8174c" fill-opacity="0.25" stroke="#a5164a" stroke-width="1.1"/><circle cx="439.2" cy="109.5" r="5.9" fill="#a8174c" fill-opacity="0.25" stroke="#a5164a" stroke-width="1.1"/><circle cx="442.0" cy="110.0" r="5.9" fill="#a8174c" fill-opacity="0.25" stroke="#a5164a" stroke-width="1.1"/><circle cx="435.0" cy="106.5" r="5.9" fill="#a8174c" fill-opacity="0.25" stroke="#a5164a" stroke-width="1.1"/><circle cx="438.5" cy="112.0" r="5.9" fill="#a8174c" fill-opacity="0.25" stroke="#a5164a" stroke-width="1.1"/><circle cx="431.0" cy="108.5" r="5.9" fill="#a8174c" fill-opacity="0.25" stroke="#a5164a" stroke-width="1.1"/><circle cx="429.6" cy="125.5" r="5.9" fill="#a8174c" fill-opacity="0.25" stroke="#a5164a" stroke-width="1.1"/><circle cx="428.9" cy="125.0" r="5.9" fill="#a8174c" fill-opacity="0.25" stroke="#a5164a" stroke-width="1.1"/><circle cx="430.2" cy="126.1" r="5.9" fill="#a8174c" fill-opacity="0.25" stroke="#a5164a" stroke-width="1.1"/><circle cx="441.2" cy="124.8" r="5.9" fill="#a8174c" fill-opacity="0.25" stroke="#a5164a" stroke-width="1.1"/><circle cx="450.4" cy="98.7" r="5.9" fill="#a8174c" fill-opacity="0.25" stroke="#a5164a" stroke-width="1.1"/><circle cx="451.0" cy="100.3" r="5.9" fill="#a8174c" fill-opacity="0.25" stroke="#a5164a" stroke-width="1.1"/><circle cx="471.2" cy="102.0" r="5.9" fill="#a8174c" fill-opacity="0.25" stroke="#a5164a" stroke-width="1.1"/><circle cx="413.2" cy="160.7" r="5.9" fill="#a8174c" fill-opacity="0.25" stroke="#a5164a" stroke-width="1.1"/><circle cx="412.8" cy="161.1" r="5.9" fill="#a8174c" fill-opacity="0.25" stroke="#a5164a" stroke-width="1.1"/><circle cx="418.2" cy="173.2" r="5.9" fill="#a8174c" fill-opacity="0.25" stroke="#a5164a" stroke-width="1.1"/><circle cx="424.2" cy="174.4" r="5.9" fill="#a8174c" fill-opacity="0.25" stroke="#a5164a" stroke-width="1.1"/></svg><div class="abs" style="left:5.9px;top:5.9px;width:18.6px;height:35.4px;background:rgba(0,0,0,0.2);border-radius:2.5px"></div><div class="abs" style="left:6.9px;top:6.9px;width:16.6px;height:33.4px;background:#fff;border-radius:1.8px"></div><div class="abs" style="left:6.9px;top:23.4px;width:16.6px;height:0.5px;background:#ddd"></div><span class="abs" style="left:6.9px;top:7.6px;width:16.6px;text-align:center;font-size:11.5px;font-weight:bold;line-height:15px;color:#000;font-family:'Liberation Mono',monospace">+</span><span class="abs" style="left:6.9px;top:24.2px;width:16.6px;text-align:center;font-size:11.5px;font-weight:bold;line-height:15px;color:#000;font-family:'Liberation Mono',monospace">−</span><div class="abs" style="right:0;bottom:0;height:7.2px;padding:0 2.6px;background:rgba(255,255,255,0.75);font-size:6.33px;line-height:7.2px;color:#333;white-space:nowrap"><span style="color:#0078a8">Leaflet</span> | © <span style="color:#0078a8">OpenStreetMap</span> contributors</div></div><svg class="abs" style="right:1.2px;bottom:1.2px" width="4" height="4" viewBox="0 0 4 4"><path d="M3.5 0.5V3.5H0.5" fill="none" stroke="#777" stroke-width="0.9"/></svg></div><div class="panel" style="left:556.8px;top:126.8px;width:255.2px;height:365.7px"><div class="abs" style="left:11.8px;top:15.2px;width:8.7px;height:1.15px;background:#b4b4b4"></div><div class="abs" style="left:11.8px;top:18.2px;width:8.7px;height:1.15px;background:#b4b4b4"></div><div class="abs" style="left:11.8px;top:21.2px;width:8.7px;height:1.15px;background:#b4b4b4"></div><span class="wt" style="left:23.6px;top:12.0px">Found or Banned in a month</span><svg class="abs" style="left:212.4px;top:15.5px" width="33" height="10" viewBox="0 0 33 10"><path d="M0 0.8L7.9 5 0 9.2z" fill="#bdbdbd"/><path d="M10.7 5L13.3 2.9V4.5H18.8V2.9L21.4 5 18.8 7.1V5.5H13.3V7.1z" fill="#bdbdbd"/><path d="M24.6 3.3L27.65 6.4 30.7 3.3" fill="none" stroke="#bdbdbd" stroke-width="1.25"/></svg><svg class="abs" style="left:0;top:0" width="255.2" height="365.7" viewBox="0 0 255.2 365.7"><defs><clipPath id="pc"><rect x="0" y="28.799999999999997" width="255.2" height="340"/></clipPath></defs><g clip-path="url(#pc)"><path d="M136.60000000000002 52.99999999999997A77.1 77.1 0 1 1 136.59000000000003 52.99999999999997ZM136.60000000000002 99.19999999999996A30.9 30.9 0 1 0 136.61 99.19999999999996Z" fill="#1f77b4" fill-rule="evenodd"/><path d="M136.60 53.00A77.1 77.1 0 0 0 109.15 58.05L125.60 101.22A30.9 30.9 0 0 1 136.60 99.20Z" fill="#ff7f0e"/><path d="M109.15 58.05A77.1 77.1 0 0 0 98.14 63.28L121.19 103.32A30.9 30.9 0 0 1 125.60 101.22Z" fill="#2ca02c"/><path d="M98.14 63.28A77.1 77.1 0 0 0 92.98 66.53L119.12 104.62A30.9 30.9 0 0 1 121.19 103.32Z" fill="#d62728"/><path d="M92.98 66.53A77.1 77.1 0 0 0 88.09 70.18L117.16 106.08A30.9 30.9 0 0 1 119.12 104.62Z" fill="#9467bd"/><path d="M88.09 70.18A77.1 77.1 0 0 0 83.50 74.20L115.32 107.70A30.9 30.9 0 0 1 117.16 106.08Z" fill="#8c564b"/><path d="M83.50 74.20A77.1 77.1 0 0 0 79.25 78.57L113.62 109.45A30.9 30.9 0 0 1 115.32 107.70Z" fill="#e377c2"/><path d="M79.25 78.57A77.1 77.1 0 0 0 75.36 83.27L112.05 111.33A30.9 30.9 0 0 1 113.62 109.45Z" fill="#7f7f7f"/><path d="M75.36 83.27A77.1 77.1 0 0 0 71.84 88.25L110.65 113.33A30.9 30.9 0 0 1 112.05 111.33Z" fill="#bcbd22"/><path d="M71.84 88.25A77.1 77.1 0 0 0 68.74 93.50L109.40 115.43A30.9 30.9 0 0 1 110.65 113.33Z" fill="#17becf"/><path d="M68.74 93.50A77.1 77.1 0 0 0 66.06 98.98L108.33 117.63A30.9 30.9 0 0 1 109.40 115.43Z" fill="#55a8e2"/><path d="M66.06 98.98A77.1 77.1 0 0 0 63.82 104.66L107.43 119.90A30.9 30.9 0 0 1 108.33 117.63Z" fill="#ffb574"/><path d="M63.82 104.66A77.1 77.1 0 0 0 62.36 109.31L106.84 121.77A30.9 30.9 0 0 1 107.43 119.90Z" fill="#57d357"/><path d="M62.36 109.31A77.1 77.1 0 0 0 61.19 114.05L106.38 123.67A30.9 30.9 0 0 1 106.84 121.77Z" fill="#e57c7c"/><path d="M61.19 114.05A77.1 77.1 0 0 0 60.72 116.44L106.19 124.63A30.9 30.9 0 0 1 106.38 123.67Z" fill="#c6aedc"/><text x="124.40000000000009" y="68.00000000000001" text-anchor="middle" font-family="Liberation Sans, sans-serif" font-size="6.9" fill="#444">5.79%</text><text x="170.80000000000007" y="173.7" text-anchor="middle" font-family="Liberation Sans, sans-serif" font-size="6.6" font-weight="bold" fill="#fff">77.8%</text><text x="58.7" y="117.8" text-anchor="end" font-family="Liberation Sans, sans-serif" font-size="6.9" fill="#444">0.504%</text><path d="M59.2 115.5H60.9V115.2" fill="none" stroke="#444" stroke-width="0.6"/><text x="59.2" y="107.9" text-anchor="end" font-family="Liberation Sans, sans-serif" font-size="6.9" fill="#444">1.01%</text><path d="M59.5 105.6H62.2V112.2L61.7 111.7" fill="none" stroke="#444" stroke-width="0.6"/><text x="60.5" y="98.4" text-anchor="end" font-family="Liberation Sans, sans-serif" font-size="6.9" fill="#444">1.01%</text><path d="M60.8 96.1H63.5V107.5L63.1 107.0" fill="none" stroke="#444" stroke-width="0.6"/><text x="62.2" y="88.8" text-anchor="end" font-family="Liberation Sans, sans-serif" font-size="6.9" fill="#444">1.26%</text><path d="M62.5 86.5H65.2V102.3L64.9 101.8" fill="none" stroke="#444" stroke-width="0.6"/><text x="64.7" y="79.1" text-anchor="end" font-family="Liberation Sans, sans-serif" font-size="6.9" fill="#444">1.26%</text><path d="M65.0 76.8H67.7V96.7L67.3 96.2" fill="none" stroke="#444" stroke-width="0.6"/><text x="67.5" y="69.5" text-anchor="end" font-family="Liberation Sans, sans-serif" font-size="6.9" fill="#444">1.26%</text><path d="M67.8 67.2H70.5V91.3L70.2 90.8" fill="none" stroke="#444" stroke-width="0.6"/><text x="71.2" y="59.9" text-anchor="end" font-family="Liberation Sans, sans-serif" font-size="6.9" fill="#444">1.26%</text><path d="M71.5 57.6H74.2V86.2L73.6 85.7" fill="none" stroke="#444" stroke-width="0.6"/><text x="74.5" y="50.5" text-anchor="end" font-family="Liberation Sans, sans-serif" font-size="6.9" fill="#444">1.26%</text><path d="M74.8 48.2H77.5V81.4L77.3 80.9" fill="none" stroke="#444" stroke-width="0.6"/><text x="78.5" y="41.0" text-anchor="end" font-family="Liberation Sans, sans-serif" font-size="6.9" fill="#444">1.26%</text><path d="M78.8 38.7H81.5V76.8L81.3 76.3" fill="none" stroke="#444" stroke-width="0.6"/><text x="83.2" y="31.5" text-anchor="end" font-family="Liberation Sans, sans-serif" font-size="6.9" fill="#444">1.26%</text><path d="M83.5 29.2H86.2V72.6L85.8 72.1" fill="none" stroke="#444" stroke-width="0.6"/><text x="87.8" y="22.0" text-anchor="end" font-family="Liberation Sans, sans-serif" font-size="6.9" fill="#444">1.26%</text><path d="M88.1 19.7H90.8V68.8L90.5 68.3" fill="none" stroke="#444" stroke-width="0.6"/><text x="92.6" y="12.5" text-anchor="end" font-family="Liberation Sans, sans-serif" font-size="6.9" fill="#444">1.26%</text><path d="M92.9 10.2H95.6V65.4L95.5 64.9" fill="none" stroke="#444" stroke-width="0.6"/><text x="100.7" y="3.0" text-anchor="end" font-family="Liberation Sans, sans-serif" font-size="6.9" fill="#444">2.52%</text><path d="M101.0 0.7H103.7V60.9L103.5 60.4" fill="none" stroke="#444" stroke-width="0.6"/></g><rect x="42.5" y="257.9" width="6.4" height="6.4" fill="#1f77b4"/><text x="57.4" y="263.4" font-family="Liberation Sans, sans-serif" font-size="6.75" fill="#444">Beijing-CN</text><rect x="42.5" y="268.7" width="6.4" height="6.4" fill="#2ca02c"/><text x="57.4" y="274.2" font-family="Liberation Sans, sans-serif" font-size="6.75" fill="#444">Amsterdam-NL</text><rect x="42.5" y="279.6" width="6.4" height="6.4" fill="#9467bd"/><text x="57.4" y="285.1" font-family="Liberation Sans, sans-serif" font-size="6.75" fill="#444">Arezzo-IT</text><rect x="42.5" y="290.4" width="6.4" height="6.4" fill="#e377c2"/><text x="57.4" y="295.9" font-family="Liberation Sans, sans-serif" font-size="6.75" fill="#444">Campo Grande-BR</text><rect x="42.5" y="301.2" width="6.4" height="6.4" fill="#bcbd22"/><text x="57.4" y="306.7" font-family="Liberation Sans, sans-serif" font-size="6.75" fill="#444">Cartagena-CO</text><rect x="42.5" y="312.0" width="6.4" height="6.4" fill="#55a8e2"/><text x="57.4" y="317.5" font-family="Liberation Sans, sans-serif" font-size="6.75" fill="#444">Changsha-CN</text><rect x="42.5" y="322.9" width="6.4" height="6.4" fill="#57d357"/><text x="57.4" y="328.4" font-family="Liberation Sans, sans-serif" font-size="6.75" fill="#444">Alameda-US</text><rect x="42.5" y="333.7" width="6.4" height="6.4" fill="#c6aedc"/><text x="57.4" y="339.2" font-family="Liberation Sans, sans-serif" font-size="6.75" fill="#444">Asunción-PY</text><rect x="126.8" y="257.9" width="6.4" height="6.4" fill="#ff7f0e"/><text x="141.3" y="263.4" font-family="Liberation Sans, sans-serif" font-size="6.75" fill="#444">Bengaluru-IN</text><rect x="126.8" y="268.7" width="6.4" height="6.4" fill="#d62728"/><text x="141.3" y="274.2" font-family="Liberation Sans, sans-serif" font-size="6.75" fill="#444">Araguaína-BR</text><rect x="126.8" y="279.6" width="6.4" height="6.4" fill="#8c564b"/><text x="141.3" y="285.1" font-family="Liberation Sans, sans-serif" font-size="6.75" fill="#444">Borgosesia-IT</text><rect x="126.8" y="290.4" width="6.4" height="6.4" fill="#7f7f7f"/><text x="141.3" y="295.9" font-family="Liberation Sans, sans-serif" font-size="6.75" fill="#444">Cardiff-GB</text><rect x="126.8" y="301.2" width="6.4" height="6.4" fill="#17becf"/><text x="141.3" y="306.7" font-family="Liberation Sans, sans-serif" font-size="6.75" fill="#444">Central District-HK</text><rect x="126.8" y="312.0" width="6.4" height="6.4" fill="#ffb574"/><text x="141.3" y="317.5" font-family="Liberation Sans, sans-serif" font-size="6.75" fill="#444">Chengdu-CN</text><rect x="126.8" y="322.9" width="6.4" height="6.4" fill="#e57c7c"/><text x="141.3" y="328.4" font-family="Liberation Sans, sans-serif" font-size="6.75" fill="#444">Bangkok-TH</text></svg><svg class="abs" style="right:1.2px;bottom:1.2px" width="4" height="4" viewBox="0 0 4 4"><path d="M3.5 0.5V3.5H0.5" fill="none" stroke="#777" stroke-width="0.9"/></svg></div><div class="panel" style="left:818.4px;top:126.8px;width:80.7px;height:116.8px"><div class="abs" style="left:11.7px;top:15.2px;width:8.7px;height:1.15px;background:#b4b4b4"></div><div class="abs" style="left:11.7px;top:18.2px;width:8.7px;height:1.15px;background:#b4b4b4"></div><div class="abs" style="left:11.7px;top:21.2px;width:8.7px;height:1.15px;background:#b4b4b4"></div><span class="wt" style="left:23.5px;top:12.0px">Found</span><svg class="abs" style="left:37.9px;top:29.6px" width="33" height="10" viewBox="0 0 33 10"><path d="M0 0.8L7.9 5 0 9.2z" fill="#bdbdbd"/><path d="M10.7 5L13.3 2.9V4.5H18.8V2.9L21.4 5 18.8 7.1V5.5H13.3V7.1z" fill="#bdbdbd"/><path d="M24.6 3.3L27.65 6.4 30.7 3.3" fill="none" stroke="#bdbdbd" stroke-width="1.25"/></svg><span class="abs" style="left:18.200000000000045px;top:46px;font-size:23.6px;color:#3a3a3a;line-height:28px;letter-spacing:-0.2px">967</span><svg class="abs" style="right:1.2px;bottom:1.2px" width="4" height="4" viewBox="0 0 4 4"><path d="M3.5 0.5V3.5H0.5" fill="none" stroke="#777" stroke-width="0.9"/></svg></div><div class="panel" style="left:905.8px;top:126.8px;width:80.7px;height:116.8px"><div class="abs" style="left:11.7px;top:15.2px;width:8.7px;height:1.15px;background:#b4b4b4"></div><div class="abs" style="left:11.7px;top:18.2px;width:8.7px;height:1.15px;background:#b4b4b4"></div><div class="abs" style="left:11.7px;top:21.2px;width:8.7px;height:1.15px;background:#b4b4b4"></div><span class="wt" style="left:23.5px;top:12.0px">Ban</span><svg class="abs" style="left:37.9px;top:29.6px" width="33" height="10" viewBox="0 0 33 10"><path d="M0 0.8L7.9 5 0 9.2z" fill="#bdbdbd"/><path d="M10.7 5L13.3 2.9V4.5H18.8V2.9L21.4 5 18.8 7.1V5.5H13.3V7.1z" fill="#bdbdbd"/><path d="M24.6 3.3L27.65 6.4 30.7 3.3" fill="none" stroke="#bdbdbd" stroke-width="1.25"/></svg><span class="abs" style="left:17.700000000000045px;top:46px;font-size:23.6px;color:#3a3a3a;line-height:28px;letter-spacing:-0.2px">232</span><svg class="abs" style="right:1.2px;bottom:1.2px" width="4" height="4" viewBox="0 0 4 4"><path d="M3.5 0.5V3.5H0.5" fill="none" stroke="#777" stroke-width="0.9"/></svg></div><div class="panel" style="left:992.6px;top:126.8px;width:80.7px;height:116.8px"><div class="abs" style="left:11.7px;top:15.2px;width:8.7px;height:1.15px;background:#b4b4b4"></div><div class="abs" style="left:11.7px;top:18.2px;width:8.7px;height:1.15px;background:#b4b4b4"></div><div class="abs" style="left:11.7px;top:21.2px;width:8.7px;height:1.15px;background:#b4b4b4"></div><span class="wt" style="left:23.5px;top:12.0px">Unban</span><svg class="abs" style="left:37.9px;top:29.6px" width="33" height="10" viewBox="0 0 33 10"><path d="M0 0.8L7.9 5 0 9.2z" fill="#bdbdbd"/><path d="M10.7 5L13.3 2.9V4.5H18.8V2.9L21.4 5 18.8 7.1V5.5H13.3V7.1z" fill="#bdbdbd"/><path d="M24.6 3.3L27.65 6.4 30.7 3.3" fill="none" stroke="#bdbdbd" stroke-width="1.25"/></svg><span class="abs" style="left:17.600000000000023px;top:46px;font-size:23.6px;color:#3a3a3a;line-height:28px;letter-spacing:-0.2px">173</span><svg class="abs" style="right:1.2px;bottom:1.2px" width="4" height="4" viewBox="0 0 4 4"><path d="M3.5 0.5V3.5H0.5" fill="none" stroke="#777" stroke-width="0.9"/></svg></div><div class="panel" style="left:818.5px;top:251px;width:254.8px;height:241.7px"><div class="abs" style="left:11.7px;top:15.2px;width:8.7px;height:1.15px;background:#b4b4b4"></div><div class="abs" style="left:11.7px;top:18.2px;width:8.7px;height:1.15px;background:#b4b4b4"></div><div class="abs" style="left:11.7px;top:21.2px;width:8.7px;height:1.15px;background:#b4b4b4"></div><span class="wt" style="left:23.5px;top:12.0px">Top Found or Banned in a month</span><svg class="abs" style="left:212.4px;top:15.5px" width="33" height="10" viewBox="0 0 33 10"><path d="M0 0.8L7.9 5 0 9.2z" fill="#bdbdbd"/><path d="M10.7 5L13.3 2.9V4.5H18.8V2.9L21.4 5 18.8 7.1V5.5H13.3V7.1z" fill="#bdbdbd"/><path d="M24.6 3.3L27.65 6.4 30.7 3.3" fill="none" stroke="#bdbdbd" stroke-width="1.25"/></svg><div class="abs" style="left:19.4px;top:37px;width:216.2px;height:14px;background:#1f1f1f"></div><span class="abs tt" style="left:22.1px;top:41px;color:#fff">clientip_city_name</span><span class="abs tt" style="left:188px;top:41px;color:#fff">hit</span><span class="abs tt" style="left:22.1px;top:58.3px">Beijing</span><span class="abs tt" style="left:188px;top:58.3px">309</span><div class="abs" style="left:19.4px;top:68.6px;width:216.2px;height:0.6px;background:#ebebeb"></div><span class="abs tt" style="left:22.1px;top:75.8px">N/A</span><span class="abs tt" style="left:188px;top:75.8px">203</span><div class="abs" style="left:19.4px;top:86.1px;width:216.2px;height:0.6px;background:#ebebeb"></div><span class="abs tt" style="left:22.1px;top:93.3px">Singapore</span><span class="abs tt" style="left:188px;top:93.3px">42</span><div class="abs" style="left:19.4px;top:103.6px;width:216.2px;height:0.6px;background:#ebebeb"></div><span class="abs tt" style="left:22.1px;top:110.8px">Guangzhou</span><span class="abs tt" style="left:188px;top:110.8px">27</span><div class="abs" style="left:19.4px;top:121.1px;width:216.2px;height:0.6px;background:#ebebeb"></div><span class="abs tt" style="left:22.1px;top:128.3px">Clifton</span><span class="abs tt" style="left:188px;top:128.3px">26</span><div class="abs" style="left:19.4px;top:138.6px;width:216.2px;height:0.6px;background:#ebebeb"></div><span class="abs tt" style="left:22.1px;top:145.8px">Bengaluru</span><span class="abs tt" style="left:188px;top:145.8px">23</span><div class="abs" style="left:19.4px;top:156.1px;width:216.2px;height:0.6px;background:#ebebeb"></div><span class="abs tt" style="left:22.1px;top:163.3px">Hangzhou</span><span class="abs tt" style="left:188px;top:163.3px">20</span><div class="abs" style="left:19.4px;top:173.6px;width:216.2px;height:0.6px;background:#ebebeb"></div><span class="abs tt" style="left:22.1px;top:180.8px">Montreal</span><span class="abs tt" style="left:188px;top:180.8px">20</span><div class="abs" style="left:19.4px;top:191.1px;width:216.2px;height:0.6px;background:#ebebeb"></div><span class="abs tt" style="left:22.1px;top:198.3px">North York</span><span class="abs tt" style="left:188px;top:198.3px">20</span><div class="abs" style="left:19.4px;top:208.6px;width:216.2px;height:0.6px;background:#ebebeb"></div><span class="abs tt" style="left:22.1px;top:215.8px">Wuhan</span><span class="abs tt" style="left:188px;top:215.8px">20</span><div class="abs" style="left:19.4px;top:226.1px;width:216.2px;height:0.6px;background:#ebebeb"></div><div class="abs" style="left:236.3px;top:30px;width:8px;height:201.8px;background:#f7f7f7"></div><div class="abs" style="left:238.2px;top:30.5px;width:3.8px;height:21px;background:#c4c4c4;border-radius:2px"></div><svg class="abs" style="right:1.2px;bottom:1.2px" width="4" height="4" viewBox="0 0 4 4"><path d="M3.5 0.5V3.5H0.5" fill="none" stroke="#777" stroke-width="0.9"/></svg></div><span class="abs" style="left:952px;top:230.4px;font-size:21.6px;line-height:24px;font-weight:bold;color:#8b0a0a;transform-origin:0 0;transform:scaleX(1.135);white-space:nowrap">xh86.me</span></div></body></html>
